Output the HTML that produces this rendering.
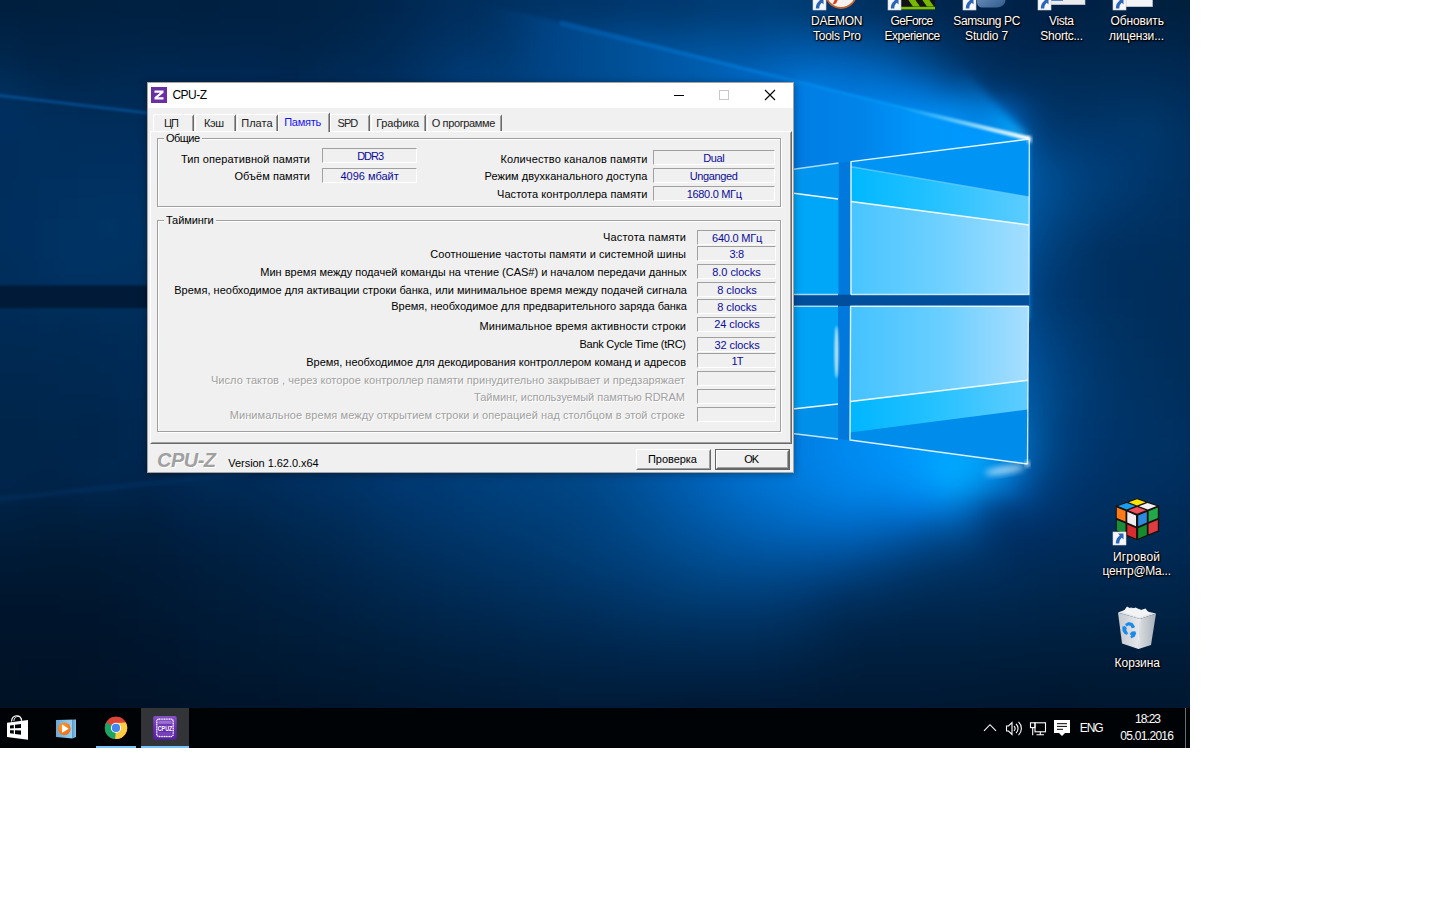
<!DOCTYPE html>
<html lang="ru"><head><meta charset="utf-8"><title>CPU-Z</title>
<style>
html,body{margin:0;padding:0;background:#fff;}
body{width:1440px;height:900px;overflow:hidden;position:relative;font-family:'Liberation Sans',sans-serif;}
#desk{position:absolute;left:0;top:0;width:1190px;height:748px;overflow:hidden;background:#06305f;}
.wp{position:absolute;left:0;top:0;}
.t{position:absolute;white-space:pre;font-family:'Liberation Sans',sans-serif;}
#win{position:absolute;left:0;top:0;width:0;height:0;}
#win .frame{position:absolute;left:147px;top:82px;width:647px;height:391px;box-sizing:border-box;border:1px solid #a8a29c;background:#f0f0f0;box-shadow:0 1px 8px rgba(0,0,0,.35);}
#win .title{position:absolute;left:148px;top:83px;width:645px;height:25px;background:#fff;}
.vb{position:absolute;box-sizing:border-box;border:1px solid;border-color:#a0a0a0 #fff #fff #a0a0a0;background:#f0f0f0;}
.tab{position:absolute;top:114px;height:17px;box-sizing:border-box;background:#f0f0f0;border-left:1px solid #fff;border-top:1px solid #fff;border-right:1px solid #696969;border-radius:2px 2px 0 0;}
.tab:after{content:"";position:absolute;right:0;top:1px;bottom:0;width:1px;background:#a0a0a0;}
.tab.sel{top:112px;height:20px;}
.panel{position:absolute;left:150px;top:131px;width:642px;height:313px;box-sizing:border-box;border:1px solid;border-color:#fff #696969 #696969 #fff;}
.panel:after{content:"";position:absolute;left:0;top:0;right:0;bottom:0;border:1px solid;border-color:transparent #a0a0a0 #a0a0a0 transparent;}
.gb{position:absolute;box-sizing:border-box;border:1px solid #a0a0a0;box-shadow:1px 1px 0 #fff, inset 1px 1px 0 #fff;}
.btn{position:absolute;box-sizing:border-box;background:#f0f0f0;border:1px solid;border-color:#fff #696969 #696969 #fff;}
.btn:after{content:"";position:absolute;left:0;top:0;right:0;bottom:0;border:1px solid;border-color:transparent #a0a0a0 #a0a0a0 transparent;}
#tb{position:absolute;left:0;top:0;width:0;height:0;}
#tb .bar{position:absolute;left:0;top:708px;width:1190px;height:40px;background:#000306;}

</style></head>
<body>
<div id="desk">
<svg class="wp" width="1190" height="748" viewBox="0 0 1190 748">
<defs>
<filter id="mb" x="-10%" y="-10%" width="120%" height="120%" color-interpolation-filters="sRGB"><feGaussianBlur stdDeviation="9"/></filter>
</defs>
<rect width="1190" height="748" fill="#05305f"/>
<g filter="url(#mb)">
<rect x="-90" y="-90" width="131" height="111" fill="#001f3f"/>
<rect x="39" y="-90" width="22" height="111" fill="#00203f"/>
<rect x="59" y="-90" width="42" height="111" fill="#002040"/>
<rect x="99" y="-90" width="22" height="111" fill="#002041"/>
<rect x="119" y="-90" width="62" height="111" fill="#002141"/>
<rect x="179" y="-90" width="42" height="111" fill="#002041"/>
<rect x="219" y="-90" width="22" height="111" fill="#002142"/>
<rect x="239" y="-90" width="42" height="111" fill="#002143"/>
<rect x="279" y="-90" width="22" height="111" fill="#002244"/>
<rect x="299" y="-90" width="22" height="111" fill="#002245"/>
<rect x="319" y="-90" width="22" height="111" fill="#002346"/>
<rect x="339" y="-90" width="22" height="111" fill="#002448"/>
<rect x="359" y="-90" width="22" height="111" fill="#00254b"/>
<rect x="379" y="-90" width="22" height="111" fill="#00264e"/>
<rect x="399" y="-90" width="22" height="111" fill="#002852"/>
<rect x="419" y="-90" width="22" height="111" fill="#002a57"/>
<rect x="439" y="-90" width="22" height="111" fill="#002d5b"/>
<rect x="459" y="-90" width="22" height="111" fill="#002e5d"/>
<rect x="479" y="-90" width="22" height="111" fill="#002f5f"/>
<rect x="499" y="-90" width="22" height="111" fill="#003161"/>
<rect x="519" y="-90" width="22" height="111" fill="#003365"/>
<rect x="539" y="-90" width="22" height="111" fill="#003467"/>
<rect x="559" y="-90" width="42" height="111" fill="#003569"/>
<rect x="599" y="-90" width="22" height="111" fill="#00366b"/>
<rect x="619" y="-90" width="22" height="111" fill="#00386f"/>
<rect x="639" y="-90" width="22" height="111" fill="#003970"/>
<rect x="659" y="-90" width="22" height="111" fill="#00396f"/>
<rect x="679" y="-90" width="22" height="111" fill="#003a71"/>
<rect x="699" y="-90" width="22" height="111" fill="#003c75"/>
<rect x="719" y="-90" width="22" height="111" fill="#003d76"/>
<rect x="739" y="-90" width="22" height="111" fill="#003d77"/>
<rect x="759" y="-90" width="22" height="111" fill="#003e78"/>
<rect x="779" y="-90" width="22" height="111" fill="#003d76"/>
<rect x="799" y="-90" width="22" height="111" fill="#003b72"/>
<rect x="819" y="-90" width="22" height="111" fill="#00376d"/>
<rect x="839" y="-90" width="22" height="111" fill="#003467"/>
<rect x="859" y="-90" width="22" height="111" fill="#003161"/>
<rect x="879" y="-90" width="22" height="111" fill="#002f5e"/>
<rect x="899" y="-90" width="22" height="111" fill="#002c59"/>
<rect x="919" y="-90" width="22" height="111" fill="#002853"/>
<rect x="939" y="-90" width="22" height="111" fill="#00254e"/>
<rect x="959" y="-90" width="22" height="111" fill="#00244b"/>
<rect x="979" y="-90" width="22" height="111" fill="#00234b"/>
<rect x="999" y="-90" width="22" height="111" fill="#002349"/>
<rect x="1019" y="-90" width="22" height="111" fill="#002146"/>
<rect x="1039" y="-90" width="22" height="111" fill="#002045"/>
<rect x="1059" y="-90" width="42" height="111" fill="#002145"/>
<rect x="1099" y="-90" width="22" height="111" fill="#002245"/>
<rect x="1119" y="-90" width="22" height="111" fill="#002143"/>
<rect x="1139" y="-90" width="22" height="111" fill="#002141"/>
<rect x="1159" y="-90" width="22" height="111" fill="#00203f"/>
<rect x="1179" y="-90" width="101" height="111" fill="#00203e"/>
<rect x="-90" y="19" width="111" height="22" fill="#002244"/>
<rect x="19" y="19" width="22" height="22" fill="#002143"/>
<rect x="39" y="19" width="22" height="22" fill="#002142"/>
<rect x="59" y="19" width="22" height="22" fill="#002143"/>
<rect x="79" y="19" width="42" height="22" fill="#002244"/>
<rect x="119" y="19" width="62" height="22" fill="#002245"/>
<rect x="179" y="19" width="42" height="22" fill="#002244"/>
<rect x="219" y="19" width="62" height="22" fill="#002246"/>
<rect x="279" y="19" width="22" height="22" fill="#002346"/>
<rect x="299" y="19" width="22" height="22" fill="#002347"/>
<rect x="319" y="19" width="22" height="22" fill="#002449"/>
<rect x="339" y="19" width="22" height="22" fill="#00254b"/>
<rect x="359" y="19" width="22" height="22" fill="#00274d"/>
<rect x="379" y="19" width="22" height="22" fill="#002851"/>
<rect x="399" y="19" width="22" height="22" fill="#002a56"/>
<rect x="419" y="19" width="22" height="22" fill="#002d5b"/>
<rect x="439" y="19" width="22" height="22" fill="#002f60"/>
<rect x="459" y="19" width="22" height="22" fill="#003163"/>
<rect x="479" y="19" width="22" height="22" fill="#003365"/>
<rect x="499" y="19" width="22" height="22" fill="#003568"/>
<rect x="519" y="19" width="22" height="22" fill="#00386e"/>
<rect x="539" y="19" width="22" height="22" fill="#003c76"/>
<rect x="559" y="19" width="42" height="22" fill="#003f7a"/>
<rect x="599" y="19" width="22" height="22" fill="#00417e"/>
<rect x="619" y="19" width="42" height="22" fill="#004382"/>
<rect x="659" y="19" width="22" height="22" fill="#004381"/>
<rect x="679" y="19" width="22" height="22" fill="#004583"/>
<rect x="699" y="19" width="22" height="22" fill="#004787"/>
<rect x="719" y="19" width="22" height="22" fill="#004788"/>
<rect x="739" y="19" width="22" height="22" fill="#004789"/>
<rect x="759" y="19" width="22" height="22" fill="#00498b"/>
<rect x="779" y="19" width="22" height="22" fill="#004a8c"/>
<rect x="799" y="19" width="22" height="22" fill="#00488a"/>
<rect x="819" y="19" width="22" height="22" fill="#004585"/>
<rect x="839" y="19" width="22" height="22" fill="#00427f"/>
<rect x="859" y="19" width="22" height="22" fill="#003e7a"/>
<rect x="879" y="19" width="22" height="22" fill="#003b73"/>
<rect x="899" y="19" width="22" height="22" fill="#00366b"/>
<rect x="919" y="19" width="22" height="22" fill="#003061"/>
<rect x="939" y="19" width="22" height="22" fill="#002b57"/>
<rect x="959" y="19" width="22" height="22" fill="#002751"/>
<rect x="979" y="19" width="22" height="22" fill="#00264f"/>
<rect x="999" y="19" width="22" height="22" fill="#00244d"/>
<rect x="1019" y="19" width="22" height="22" fill="#00234a"/>
<rect x="1039" y="19" width="22" height="22" fill="#002249"/>
<rect x="1059" y="19" width="22" height="22" fill="#002349"/>
<rect x="1079" y="19" width="42" height="22" fill="#002449"/>
<rect x="1119" y="19" width="22" height="22" fill="#002448"/>
<rect x="1139" y="19" width="22" height="22" fill="#002347"/>
<rect x="1159" y="19" width="22" height="22" fill="#002345"/>
<rect x="1179" y="19" width="101" height="22" fill="#002244"/>
<rect x="-90" y="39" width="111" height="22" fill="#002549"/>
<rect x="19" y="39" width="42" height="22" fill="#002346"/>
<rect x="59" y="39" width="22" height="22" fill="#002347"/>
<rect x="79" y="39" width="22" height="22" fill="#002448"/>
<rect x="99" y="39" width="22" height="22" fill="#002449"/>
<rect x="119" y="39" width="22" height="22" fill="#00244a"/>
<rect x="139" y="39" width="42" height="22" fill="#00254a"/>
<rect x="179" y="39" width="62" height="22" fill="#00244a"/>
<rect x="239" y="39" width="22" height="22" fill="#00244b"/>
<rect x="259" y="39" width="22" height="22" fill="#00244a"/>
<rect x="279" y="39" width="22" height="22" fill="#002449"/>
<rect x="299" y="39" width="22" height="22" fill="#00244a"/>
<rect x="319" y="39" width="22" height="22" fill="#00264d"/>
<rect x="339" y="39" width="22" height="22" fill="#00274f"/>
<rect x="359" y="39" width="22" height="22" fill="#002851"/>
<rect x="379" y="39" width="22" height="22" fill="#002a55"/>
<rect x="399" y="39" width="22" height="22" fill="#002d5b"/>
<rect x="419" y="39" width="22" height="22" fill="#003061"/>
<rect x="439" y="39" width="22" height="22" fill="#003366"/>
<rect x="459" y="39" width="22" height="22" fill="#00356a"/>
<rect x="479" y="39" width="22" height="22" fill="#00376c"/>
<rect x="499" y="39" width="22" height="22" fill="#00386c"/>
<rect x="519" y="39" width="22" height="22" fill="#003e77"/>
<rect x="539" y="39" width="22" height="22" fill="#004382"/>
<rect x="559" y="39" width="22" height="22" fill="#004789"/>
<rect x="579" y="39" width="22" height="22" fill="#004a8d"/>
<rect x="599" y="39" width="22" height="22" fill="#004f95"/>
<rect x="619" y="39" width="22" height="22" fill="#004e95"/>
<rect x="639" y="39" width="22" height="22" fill="#004f95"/>
<rect x="659" y="39" width="22" height="22" fill="#004f96"/>
<rect x="679" y="39" width="22" height="22" fill="#005098"/>
<rect x="699" y="39" width="22" height="22" fill="#00529a"/>
<rect x="719" y="39" width="22" height="22" fill="#00529b"/>
<rect x="739" y="39" width="22" height="22" fill="#00529c"/>
<rect x="759" y="39" width="22" height="22" fill="#0054a0"/>
<rect x="779" y="39" width="22" height="22" fill="#0057a5"/>
<rect x="799" y="39" width="22" height="22" fill="#0058a6"/>
<rect x="819" y="39" width="22" height="22" fill="#0056a4"/>
<rect x="839" y="39" width="22" height="22" fill="#0054a0"/>
<rect x="859" y="39" width="22" height="22" fill="#005098"/>
<rect x="879" y="39" width="22" height="22" fill="#004b8f"/>
<rect x="899" y="39" width="22" height="22" fill="#004483"/>
<rect x="919" y="39" width="22" height="22" fill="#003c75"/>
<rect x="939" y="39" width="22" height="22" fill="#003265"/>
<rect x="959" y="39" width="22" height="22" fill="#002c5a"/>
<rect x="979" y="39" width="22" height="22" fill="#002955"/>
<rect x="999" y="39" width="22" height="22" fill="#002752"/>
<rect x="1019" y="39" width="22" height="22" fill="#00264f"/>
<rect x="1039" y="39" width="22" height="22" fill="#00254e"/>
<rect x="1059" y="39" width="42" height="22" fill="#00264e"/>
<rect x="1099" y="39" width="42" height="22" fill="#00274e"/>
<rect x="1139" y="39" width="22" height="22" fill="#00264d"/>
<rect x="1159" y="39" width="22" height="22" fill="#00264c"/>
<rect x="1179" y="39" width="101" height="22" fill="#00254a"/>
<rect x="-90" y="59" width="111" height="22" fill="#002951"/>
<rect x="19" y="59" width="22" height="22" fill="#00264d"/>
<rect x="39" y="59" width="22" height="22" fill="#00264b"/>
<rect x="59" y="59" width="22" height="22" fill="#00254b"/>
<rect x="79" y="59" width="22" height="22" fill="#00264c"/>
<rect x="99" y="59" width="22" height="22" fill="#00264d"/>
<rect x="119" y="59" width="22" height="22" fill="#00274e"/>
<rect x="139" y="59" width="42" height="22" fill="#002750"/>
<rect x="179" y="59" width="22" height="22" fill="#00274f"/>
<rect x="199" y="59" width="42" height="22" fill="#002750"/>
<rect x="239" y="59" width="22" height="22" fill="#002751"/>
<rect x="259" y="59" width="22" height="22" fill="#002750"/>
<rect x="279" y="59" width="22" height="22" fill="#00264f"/>
<rect x="299" y="59" width="22" height="22" fill="#00274f"/>
<rect x="319" y="59" width="22" height="22" fill="#002852"/>
<rect x="339" y="59" width="22" height="22" fill="#002a55"/>
<rect x="359" y="59" width="22" height="22" fill="#002b57"/>
<rect x="379" y="59" width="22" height="22" fill="#002c5a"/>
<rect x="399" y="59" width="22" height="22" fill="#002f60"/>
<rect x="419" y="59" width="22" height="22" fill="#003366"/>
<rect x="439" y="59" width="22" height="22" fill="#00366d"/>
<rect x="459" y="59" width="22" height="22" fill="#003a73"/>
<rect x="479" y="59" width="22" height="22" fill="#003c75"/>
<rect x="499" y="59" width="22" height="22" fill="#003e78"/>
<rect x="519" y="59" width="22" height="22" fill="#004380"/>
<rect x="539" y="59" width="22" height="22" fill="#004889"/>
<rect x="559" y="59" width="22" height="22" fill="#004c91"/>
<rect x="579" y="59" width="22" height="22" fill="#005098"/>
<rect x="599" y="59" width="22" height="22" fill="#00539e"/>
<rect x="619" y="59" width="22" height="22" fill="#0056a1"/>
<rect x="639" y="59" width="22" height="22" fill="#0057a5"/>
<rect x="659" y="59" width="22" height="22" fill="#0059a7"/>
<rect x="679" y="59" width="22" height="22" fill="#005aa9"/>
<rect x="699" y="59" width="22" height="22" fill="#005cac"/>
<rect x="719" y="59" width="22" height="22" fill="#005dae"/>
<rect x="739" y="59" width="22" height="22" fill="#005fb2"/>
<rect x="759" y="59" width="22" height="22" fill="#0062b8"/>
<rect x="779" y="59" width="22" height="22" fill="#0065be"/>
<rect x="799" y="59" width="22" height="22" fill="#0068c2"/>
<rect x="819" y="59" width="22" height="22" fill="#0069c4"/>
<rect x="839" y="59" width="22" height="22" fill="#0066c0"/>
<rect x="859" y="59" width="22" height="22" fill="#0064ba"/>
<rect x="879" y="59" width="22" height="22" fill="#005fb1"/>
<rect x="899" y="59" width="22" height="22" fill="#0056a3"/>
<rect x="919" y="59" width="22" height="22" fill="#004d93"/>
<rect x="939" y="59" width="22" height="22" fill="#004280"/>
<rect x="959" y="59" width="22" height="22" fill="#00366c"/>
<rect x="979" y="59" width="22" height="22" fill="#002f5f"/>
<rect x="999" y="59" width="22" height="22" fill="#002c59"/>
<rect x="1019" y="59" width="22" height="22" fill="#002b57"/>
<rect x="1039" y="59" width="22" height="22" fill="#002b56"/>
<rect x="1059" y="59" width="102" height="22" fill="#002a54"/>
<rect x="1159" y="59" width="22" height="22" fill="#002953"/>
<rect x="1179" y="59" width="101" height="22" fill="#002851"/>
<rect x="-90" y="79" width="111" height="22" fill="#002e5b"/>
<rect x="19" y="79" width="22" height="22" fill="#002b56"/>
<rect x="39" y="79" width="22" height="22" fill="#002952"/>
<rect x="59" y="79" width="22" height="22" fill="#002850"/>
<rect x="79" y="79" width="22" height="22" fill="#002851"/>
<rect x="99" y="79" width="22" height="22" fill="#002952"/>
<rect x="119" y="79" width="22" height="22" fill="#002953"/>
<rect x="139" y="79" width="22" height="22" fill="#002954"/>
<rect x="159" y="79" width="62" height="22" fill="#002955"/>
<rect x="219" y="79" width="22" height="22" fill="#002956"/>
<rect x="239" y="79" width="22" height="22" fill="#002a57"/>
<rect x="259" y="79" width="42" height="22" fill="#002a56"/>
<rect x="299" y="79" width="22" height="22" fill="#002b57"/>
<rect x="319" y="79" width="22" height="22" fill="#002c59"/>
<rect x="339" y="79" width="22" height="22" fill="#002d5b"/>
<rect x="359" y="79" width="22" height="22" fill="#002e5e"/>
<rect x="379" y="79" width="22" height="22" fill="#003061"/>
<rect x="399" y="79" width="22" height="22" fill="#003266"/>
<rect x="419" y="79" width="22" height="22" fill="#00366d"/>
<rect x="439" y="79" width="22" height="22" fill="#003a74"/>
<rect x="459" y="79" width="22" height="22" fill="#003e7a"/>
<rect x="479" y="79" width="22" height="22" fill="#00407e"/>
<rect x="499" y="79" width="22" height="22" fill="#004382"/>
<rect x="519" y="79" width="22" height="22" fill="#004789"/>
<rect x="539" y="79" width="22" height="22" fill="#004c90"/>
<rect x="559" y="79" width="22" height="22" fill="#005098"/>
<rect x="579" y="79" width="22" height="22" fill="#00549f"/>
<rect x="599" y="79" width="22" height="22" fill="#0057a5"/>
<rect x="619" y="79" width="22" height="22" fill="#005aaa"/>
<rect x="639" y="79" width="22" height="22" fill="#005dae"/>
<rect x="659" y="79" width="22" height="22" fill="#005fb2"/>
<rect x="679" y="79" width="22" height="22" fill="#0061b5"/>
<rect x="699" y="79" width="22" height="22" fill="#0063ba"/>
<rect x="719" y="79" width="22" height="22" fill="#0066be"/>
<rect x="739" y="79" width="22" height="22" fill="#006ac5"/>
<rect x="759" y="79" width="22" height="22" fill="#0070cd"/>
<rect x="779" y="79" width="22" height="22" fill="#0077d8"/>
<rect x="799" y="79" width="22" height="22" fill="#007ee1"/>
<rect x="819" y="79" width="22" height="22" fill="#0078da"/>
<rect x="839" y="79" width="22" height="22" fill="#0075d7"/>
<rect x="859" y="79" width="22" height="22" fill="#0075d6"/>
<rect x="879" y="79" width="22" height="22" fill="#0073d3"/>
<rect x="899" y="79" width="22" height="22" fill="#0070ce"/>
<rect x="919" y="79" width="22" height="22" fill="#006ac3"/>
<rect x="939" y="79" width="22" height="22" fill="#005dae"/>
<rect x="959" y="79" width="22" height="22" fill="#004c91"/>
<rect x="979" y="79" width="22" height="22" fill="#003a72"/>
<rect x="999" y="79" width="22" height="22" fill="#00356a"/>
<rect x="1019" y="79" width="22" height="22" fill="#003163"/>
<rect x="1039" y="79" width="22" height="22" fill="#002f5d"/>
<rect x="1059" y="79" width="22" height="22" fill="#002d5b"/>
<rect x="1079" y="79" width="22" height="22" fill="#002d5a"/>
<rect x="1099" y="79" width="22" height="22" fill="#002e5b"/>
<rect x="1119" y="79" width="22" height="22" fill="#002e5c"/>
<rect x="1139" y="79" width="22" height="22" fill="#002e5b"/>
<rect x="1159" y="79" width="22" height="22" fill="#002d59"/>
<rect x="1179" y="79" width="101" height="22" fill="#002b56"/>
<rect x="-90" y="99" width="111" height="22" fill="#003060"/>
<rect x="19" y="99" width="22" height="22" fill="#002e5b"/>
<rect x="39" y="99" width="42" height="22" fill="#002c59"/>
<rect x="79" y="99" width="62" height="22" fill="#002b57"/>
<rect x="139" y="99" width="42" height="22" fill="#002b58"/>
<rect x="179" y="99" width="22" height="22" fill="#002b59"/>
<rect x="199" y="99" width="22" height="22" fill="#002c5a"/>
<rect x="219" y="99" width="22" height="22" fill="#002c5b"/>
<rect x="239" y="99" width="22" height="22" fill="#002d5c"/>
<rect x="259" y="99" width="22" height="22" fill="#002e5d"/>
<rect x="279" y="99" width="22" height="22" fill="#002f5e"/>
<rect x="299" y="99" width="22" height="22" fill="#002f5f"/>
<rect x="319" y="99" width="22" height="22" fill="#003060"/>
<rect x="339" y="99" width="22" height="22" fill="#003162"/>
<rect x="359" y="99" width="22" height="22" fill="#003264"/>
<rect x="379" y="99" width="22" height="22" fill="#003468"/>
<rect x="399" y="99" width="22" height="22" fill="#00366c"/>
<rect x="419" y="99" width="22" height="22" fill="#003972"/>
<rect x="439" y="99" width="22" height="22" fill="#003d79"/>
<rect x="459" y="99" width="22" height="22" fill="#00417f"/>
<rect x="479" y="99" width="22" height="22" fill="#004485"/>
<rect x="499" y="99" width="22" height="22" fill="#00478a"/>
<rect x="519" y="99" width="22" height="22" fill="#004b90"/>
<rect x="539" y="99" width="22" height="22" fill="#004f96"/>
<rect x="559" y="99" width="22" height="22" fill="#00539d"/>
<rect x="579" y="99" width="22" height="22" fill="#0057a4"/>
<rect x="599" y="99" width="22" height="22" fill="#005aaa"/>
<rect x="619" y="99" width="22" height="22" fill="#005db0"/>
<rect x="639" y="99" width="22" height="22" fill="#0060b5"/>
<rect x="659" y="99" width="22" height="22" fill="#0063ba"/>
<rect x="679" y="99" width="22" height="22" fill="#0066bf"/>
<rect x="699" y="99" width="22" height="22" fill="#0069c4"/>
<rect x="719" y="99" width="22" height="22" fill="#006dca"/>
<rect x="739" y="99" width="22" height="22" fill="#0071d0"/>
<rect x="759" y="99" width="22" height="22" fill="#0077d8"/>
<rect x="779" y="99" width="22" height="22" fill="#007de1"/>
<rect x="799" y="99" width="22" height="22" fill="#0081e7"/>
<rect x="819" y="99" width="42" height="22" fill="#007ee4"/>
<rect x="859" y="99" width="22" height="22" fill="#0082e9"/>
<rect x="879" y="99" width="42" height="22" fill="#0085eb"/>
<rect x="919" y="99" width="22" height="22" fill="#0085e9"/>
<rect x="939" y="99" width="22" height="22" fill="#0085e8"/>
<rect x="959" y="99" width="22" height="22" fill="#0078d2"/>
<rect x="979" y="99" width="22" height="22" fill="#0061b5"/>
<rect x="999" y="99" width="22" height="22" fill="#0055a3"/>
<rect x="1019" y="99" width="22" height="22" fill="#003e7b"/>
<rect x="1039" y="99" width="22" height="22" fill="#003467"/>
<rect x="1059" y="99" width="22" height="22" fill="#003262"/>
<rect x="1079" y="99" width="22" height="22" fill="#003162"/>
<rect x="1099" y="99" width="22" height="22" fill="#003263"/>
<rect x="1119" y="99" width="42" height="22" fill="#003363"/>
<rect x="1159" y="99" width="22" height="22" fill="#003160"/>
<rect x="1179" y="99" width="101" height="22" fill="#002e5b"/>
<rect x="-90" y="119" width="111" height="22" fill="#002e5e"/>
<rect x="19" y="119" width="22" height="22" fill="#002e5d"/>
<rect x="39" y="119" width="42" height="22" fill="#002e5c"/>
<rect x="79" y="119" width="82" height="22" fill="#002d5b"/>
<rect x="159" y="119" width="22" height="22" fill="#002d5c"/>
<rect x="179" y="119" width="22" height="22" fill="#002d5d"/>
<rect x="199" y="119" width="22" height="22" fill="#002e5e"/>
<rect x="219" y="119" width="22" height="22" fill="#002f5f"/>
<rect x="239" y="119" width="22" height="22" fill="#003061"/>
<rect x="259" y="119" width="22" height="22" fill="#003163"/>
<rect x="279" y="119" width="22" height="22" fill="#003365"/>
<rect x="299" y="119" width="42" height="22" fill="#003467"/>
<rect x="339" y="119" width="22" height="22" fill="#003468"/>
<rect x="359" y="119" width="22" height="22" fill="#00356a"/>
<rect x="379" y="119" width="22" height="22" fill="#00376d"/>
<rect x="399" y="119" width="22" height="22" fill="#003972"/>
<rect x="419" y="119" width="22" height="22" fill="#003c77"/>
<rect x="439" y="119" width="22" height="22" fill="#00407d"/>
<rect x="459" y="119" width="22" height="22" fill="#004384"/>
<rect x="479" y="119" width="22" height="22" fill="#00478a"/>
<rect x="499" y="119" width="22" height="22" fill="#004b90"/>
<rect x="519" y="119" width="22" height="22" fill="#004e95"/>
<rect x="539" y="119" width="22" height="22" fill="#00519b"/>
<rect x="559" y="119" width="22" height="22" fill="#0055a1"/>
<rect x="579" y="119" width="22" height="22" fill="#0058a8"/>
<rect x="599" y="119" width="22" height="22" fill="#005cae"/>
<rect x="619" y="119" width="22" height="22" fill="#0060b4"/>
<rect x="639" y="119" width="22" height="22" fill="#0063ba"/>
<rect x="659" y="119" width="22" height="22" fill="#0066bf"/>
<rect x="679" y="119" width="22" height="22" fill="#006ac5"/>
<rect x="699" y="119" width="22" height="22" fill="#006dcb"/>
<rect x="719" y="119" width="22" height="22" fill="#0071d0"/>
<rect x="739" y="119" width="22" height="22" fill="#0075d6"/>
<rect x="759" y="119" width="22" height="22" fill="#0079dd"/>
<rect x="779" y="119" width="22" height="22" fill="#007de2"/>
<rect x="799" y="119" width="42" height="22" fill="#007fe6"/>
<rect x="839" y="119" width="22" height="22" fill="#0081e8"/>
<rect x="859" y="119" width="22" height="22" fill="#0085ec"/>
<rect x="879" y="119" width="22" height="22" fill="#008af1"/>
<rect x="899" y="119" width="22" height="22" fill="#0091f6"/>
<rect x="919" y="119" width="22" height="22" fill="#0095fa"/>
<rect x="939" y="119" width="22" height="22" fill="#0095fb"/>
<rect x="959" y="119" width="22" height="22" fill="#008cf0"/>
<rect x="979" y="119" width="22" height="22" fill="#007dde"/>
<rect x="999" y="119" width="22" height="22" fill="#0072d1"/>
<rect x="1019" y="119" width="22" height="22" fill="#004a8e"/>
<rect x="1039" y="119" width="22" height="22" fill="#003971"/>
<rect x="1059" y="119" width="22" height="22" fill="#00376c"/>
<rect x="1079" y="119" width="42" height="22" fill="#00366a"/>
<rect x="1119" y="119" width="22" height="22" fill="#00376a"/>
<rect x="1139" y="119" width="22" height="22" fill="#00386b"/>
<rect x="1159" y="119" width="22" height="22" fill="#003465"/>
<rect x="1179" y="119" width="101" height="22" fill="#00305f"/>
<rect x="-90" y="139" width="111" height="22" fill="#002d5c"/>
<rect x="19" y="139" width="42" height="22" fill="#002e5d"/>
<rect x="59" y="139" width="22" height="22" fill="#002e5c"/>
<rect x="79" y="139" width="42" height="22" fill="#002e5d"/>
<rect x="119" y="139" width="42" height="22" fill="#002e5e"/>
<rect x="159" y="139" width="22" height="22" fill="#002f5f"/>
<rect x="179" y="139" width="22" height="22" fill="#002f60"/>
<rect x="199" y="139" width="22" height="22" fill="#003061"/>
<rect x="219" y="139" width="22" height="22" fill="#003163"/>
<rect x="239" y="139" width="22" height="22" fill="#003265"/>
<rect x="259" y="139" width="22" height="22" fill="#003468"/>
<rect x="279" y="139" width="22" height="22" fill="#00366b"/>
<rect x="299" y="139" width="62" height="22" fill="#00376d"/>
<rect x="359" y="139" width="22" height="22" fill="#00386f"/>
<rect x="379" y="139" width="22" height="22" fill="#003a72"/>
<rect x="399" y="139" width="22" height="22" fill="#003c76"/>
<rect x="419" y="139" width="22" height="22" fill="#003f7b"/>
<rect x="439" y="139" width="22" height="22" fill="#004281"/>
<rect x="459" y="139" width="22" height="22" fill="#004687"/>
<rect x="479" y="139" width="22" height="22" fill="#004a8e"/>
<rect x="499" y="139" width="22" height="22" fill="#004d94"/>
<rect x="519" y="139" width="22" height="22" fill="#005099"/>
<rect x="539" y="139" width="22" height="22" fill="#00539e"/>
<rect x="559" y="139" width="22" height="22" fill="#0056a4"/>
<rect x="579" y="139" width="22" height="22" fill="#005aaa"/>
<rect x="599" y="139" width="22" height="22" fill="#005db0"/>
<rect x="619" y="139" width="22" height="22" fill="#0061b6"/>
<rect x="639" y="139" width="22" height="22" fill="#0064bc"/>
<rect x="659" y="139" width="22" height="22" fill="#0068c3"/>
<rect x="679" y="139" width="22" height="22" fill="#006cc9"/>
<rect x="699" y="139" width="22" height="22" fill="#006fcf"/>
<rect x="719" y="139" width="22" height="22" fill="#0072d4"/>
<rect x="739" y="139" width="22" height="22" fill="#0076d9"/>
<rect x="759" y="139" width="22" height="22" fill="#0079de"/>
<rect x="779" y="139" width="22" height="22" fill="#007be1"/>
<rect x="799" y="139" width="22" height="22" fill="#007ee4"/>
<rect x="819" y="139" width="22" height="22" fill="#007fe6"/>
<rect x="839" y="139" width="42" height="22" fill="#0081e7"/>
<rect x="879" y="139" width="22" height="22" fill="#0087ec"/>
<rect x="899" y="139" width="22" height="22" fill="#008ff5"/>
<rect x="919" y="139" width="22" height="22" fill="#0094fa"/>
<rect x="939" y="139" width="22" height="22" fill="#0095fa"/>
<rect x="959" y="139" width="22" height="22" fill="#008ef1"/>
<rect x="979" y="139" width="22" height="22" fill="#0080e0"/>
<rect x="999" y="139" width="22" height="22" fill="#006dc5"/>
<rect x="1019" y="139" width="22" height="22" fill="#00539b"/>
<rect x="1039" y="139" width="22" height="22" fill="#004280"/>
<rect x="1059" y="139" width="22" height="22" fill="#003d77"/>
<rect x="1079" y="139" width="22" height="22" fill="#003b73"/>
<rect x="1099" y="139" width="22" height="22" fill="#003970"/>
<rect x="1119" y="139" width="22" height="22" fill="#00386e"/>
<rect x="1139" y="139" width="22" height="22" fill="#00376b"/>
<rect x="1159" y="139" width="22" height="22" fill="#003466"/>
<rect x="1179" y="139" width="101" height="22" fill="#003161"/>
<rect x="-90" y="159" width="111" height="22" fill="#002d5c"/>
<rect x="19" y="159" width="22" height="22" fill="#002e5d"/>
<rect x="39" y="159" width="42" height="22" fill="#002f5e"/>
<rect x="79" y="159" width="22" height="22" fill="#00305f"/>
<rect x="99" y="159" width="42" height="22" fill="#003060"/>
<rect x="139" y="159" width="42" height="22" fill="#003061"/>
<rect x="179" y="159" width="22" height="22" fill="#003162"/>
<rect x="199" y="159" width="22" height="22" fill="#003264"/>
<rect x="219" y="159" width="22" height="22" fill="#003365"/>
<rect x="239" y="159" width="22" height="22" fill="#003468"/>
<rect x="259" y="159" width="22" height="22" fill="#00366a"/>
<rect x="279" y="159" width="22" height="22" fill="#00386d"/>
<rect x="299" y="159" width="22" height="22" fill="#00396f"/>
<rect x="319" y="159" width="22" height="22" fill="#003970"/>
<rect x="339" y="159" width="22" height="22" fill="#003971"/>
<rect x="359" y="159" width="22" height="22" fill="#003a73"/>
<rect x="379" y="159" width="22" height="22" fill="#003c76"/>
<rect x="399" y="159" width="22" height="22" fill="#003e79"/>
<rect x="419" y="159" width="22" height="22" fill="#00407e"/>
<rect x="439" y="159" width="22" height="22" fill="#004383"/>
<rect x="459" y="159" width="22" height="22" fill="#004789"/>
<rect x="479" y="159" width="22" height="22" fill="#004a8f"/>
<rect x="499" y="159" width="22" height="22" fill="#004d95"/>
<rect x="519" y="159" width="22" height="22" fill="#00509a"/>
<rect x="539" y="159" width="22" height="22" fill="#00549f"/>
<rect x="559" y="159" width="22" height="22" fill="#0057a5"/>
<rect x="579" y="159" width="22" height="22" fill="#005aab"/>
<rect x="599" y="159" width="22" height="22" fill="#005eb1"/>
<rect x="619" y="159" width="22" height="22" fill="#0061b8"/>
<rect x="639" y="159" width="22" height="22" fill="#0065be"/>
<rect x="659" y="159" width="22" height="22" fill="#0069c4"/>
<rect x="679" y="159" width="22" height="22" fill="#006cca"/>
<rect x="699" y="159" width="22" height="22" fill="#0070d0"/>
<rect x="719" y="159" width="22" height="22" fill="#0073d4"/>
<rect x="739" y="159" width="22" height="22" fill="#0076d9"/>
<rect x="759" y="159" width="22" height="22" fill="#0078dd"/>
<rect x="779" y="159" width="22" height="22" fill="#007be0"/>
<rect x="799" y="159" width="22" height="22" fill="#007ce3"/>
<rect x="819" y="159" width="22" height="22" fill="#007ee5"/>
<rect x="839" y="159" width="22" height="22" fill="#0080e6"/>
<rect x="859" y="159" width="22" height="22" fill="#0081e7"/>
<rect x="879" y="159" width="22" height="22" fill="#0085ea"/>
<rect x="899" y="159" width="22" height="22" fill="#008aef"/>
<rect x="919" y="159" width="22" height="22" fill="#008df1"/>
<rect x="939" y="159" width="22" height="22" fill="#008cef"/>
<rect x="959" y="159" width="22" height="22" fill="#0086e7"/>
<rect x="979" y="159" width="22" height="22" fill="#007ad6"/>
<rect x="999" y="159" width="22" height="22" fill="#006abf"/>
<rect x="1019" y="159" width="22" height="22" fill="#0058a3"/>
<rect x="1039" y="159" width="22" height="22" fill="#004b8e"/>
<rect x="1059" y="159" width="22" height="22" fill="#004482"/>
<rect x="1079" y="159" width="22" height="22" fill="#003e79"/>
<rect x="1099" y="159" width="22" height="22" fill="#003b74"/>
<rect x="1119" y="159" width="22" height="22" fill="#00396f"/>
<rect x="1139" y="159" width="22" height="22" fill="#00366b"/>
<rect x="1159" y="159" width="22" height="22" fill="#003466"/>
<rect x="1179" y="159" width="101" height="22" fill="#003161"/>
<rect x="-90" y="179" width="111" height="22" fill="#002e5c"/>
<rect x="19" y="179" width="22" height="22" fill="#002f5e"/>
<rect x="39" y="179" width="22" height="22" fill="#00305f"/>
<rect x="59" y="179" width="22" height="22" fill="#003060"/>
<rect x="79" y="179" width="42" height="22" fill="#003161"/>
<rect x="119" y="179" width="42" height="22" fill="#003162"/>
<rect x="159" y="179" width="22" height="22" fill="#003263"/>
<rect x="179" y="179" width="22" height="22" fill="#003264"/>
<rect x="199" y="179" width="22" height="22" fill="#003365"/>
<rect x="219" y="179" width="22" height="22" fill="#003467"/>
<rect x="239" y="179" width="22" height="22" fill="#003569"/>
<rect x="259" y="179" width="22" height="22" fill="#00366c"/>
<rect x="279" y="179" width="22" height="22" fill="#00386e"/>
<rect x="299" y="179" width="22" height="22" fill="#003970"/>
<rect x="319" y="179" width="22" height="22" fill="#003a71"/>
<rect x="339" y="179" width="22" height="22" fill="#003b73"/>
<rect x="359" y="179" width="22" height="22" fill="#003c75"/>
<rect x="379" y="179" width="22" height="22" fill="#003d78"/>
<rect x="399" y="179" width="22" height="22" fill="#003f7b"/>
<rect x="419" y="179" width="22" height="22" fill="#004180"/>
<rect x="439" y="179" width="22" height="22" fill="#004484"/>
<rect x="459" y="179" width="22" height="22" fill="#004789"/>
<rect x="479" y="179" width="22" height="22" fill="#004a8f"/>
<rect x="499" y="179" width="22" height="22" fill="#004d94"/>
<rect x="519" y="179" width="22" height="22" fill="#00509a"/>
<rect x="539" y="179" width="22" height="22" fill="#0053a0"/>
<rect x="559" y="179" width="22" height="22" fill="#0057a5"/>
<rect x="579" y="179" width="22" height="22" fill="#005aab"/>
<rect x="599" y="179" width="22" height="22" fill="#005eb2"/>
<rect x="619" y="179" width="22" height="22" fill="#0061b8"/>
<rect x="639" y="179" width="22" height="22" fill="#0065be"/>
<rect x="659" y="179" width="22" height="22" fill="#0068c3"/>
<rect x="679" y="179" width="22" height="22" fill="#006cc9"/>
<rect x="699" y="179" width="22" height="22" fill="#006fcf"/>
<rect x="719" y="179" width="22" height="22" fill="#0072d3"/>
<rect x="739" y="179" width="22" height="22" fill="#0075d8"/>
<rect x="759" y="179" width="22" height="22" fill="#0077dc"/>
<rect x="779" y="179" width="22" height="22" fill="#0079df"/>
<rect x="799" y="179" width="22" height="22" fill="#007be1"/>
<rect x="819" y="179" width="22" height="22" fill="#007de3"/>
<rect x="839" y="179" width="22" height="22" fill="#007ee4"/>
<rect x="859" y="179" width="22" height="22" fill="#0080e5"/>
<rect x="879" y="179" width="22" height="22" fill="#0082e7"/>
<rect x="899" y="179" width="22" height="22" fill="#0083e8"/>
<rect x="919" y="179" width="22" height="22" fill="#0083e7"/>
<rect x="939" y="179" width="22" height="22" fill="#0081e3"/>
<rect x="959" y="179" width="22" height="22" fill="#007cda"/>
<rect x="979" y="179" width="22" height="22" fill="#0072cb"/>
<rect x="999" y="179" width="22" height="22" fill="#0066b8"/>
<rect x="1019" y="179" width="22" height="22" fill="#0058a3"/>
<rect x="1039" y="179" width="22" height="22" fill="#004e92"/>
<rect x="1059" y="179" width="22" height="22" fill="#004584"/>
<rect x="1079" y="179" width="22" height="22" fill="#003f7a"/>
<rect x="1099" y="179" width="22" height="22" fill="#003b74"/>
<rect x="1119" y="179" width="22" height="22" fill="#00386e"/>
<rect x="1139" y="179" width="22" height="22" fill="#003569"/>
<rect x="1159" y="179" width="22" height="22" fill="#003364"/>
<rect x="1179" y="179" width="101" height="22" fill="#003060"/>
<rect x="-90" y="199" width="111" height="22" fill="#002e5d"/>
<rect x="19" y="199" width="22" height="22" fill="#002f5f"/>
<rect x="39" y="199" width="22" height="22" fill="#003060"/>
<rect x="59" y="199" width="22" height="22" fill="#003161"/>
<rect x="79" y="199" width="22" height="22" fill="#003262"/>
<rect x="99" y="199" width="42" height="22" fill="#003363"/>
<rect x="139" y="199" width="22" height="22" fill="#003263"/>
<rect x="159" y="199" width="22" height="22" fill="#003364"/>
<rect x="179" y="199" width="22" height="22" fill="#003365"/>
<rect x="199" y="199" width="22" height="22" fill="#003466"/>
<rect x="219" y="199" width="22" height="22" fill="#003468"/>
<rect x="239" y="199" width="22" height="22" fill="#00366a"/>
<rect x="259" y="199" width="22" height="22" fill="#00376c"/>
<rect x="279" y="199" width="22" height="22" fill="#00386e"/>
<rect x="299" y="199" width="22" height="22" fill="#003970"/>
<rect x="319" y="199" width="22" height="22" fill="#003a72"/>
<rect x="339" y="199" width="22" height="22" fill="#003b74"/>
<rect x="359" y="199" width="22" height="22" fill="#003c77"/>
<rect x="379" y="199" width="22" height="22" fill="#003e79"/>
<rect x="399" y="199" width="22" height="22" fill="#00407d"/>
<rect x="419" y="199" width="22" height="22" fill="#004280"/>
<rect x="439" y="199" width="22" height="22" fill="#004485"/>
<rect x="459" y="199" width="22" height="22" fill="#004689"/>
<rect x="479" y="199" width="22" height="22" fill="#00498e"/>
<rect x="499" y="199" width="22" height="22" fill="#004c93"/>
<rect x="519" y="199" width="22" height="22" fill="#005099"/>
<rect x="539" y="199" width="22" height="22" fill="#00539f"/>
<rect x="559" y="199" width="22" height="22" fill="#0056a5"/>
<rect x="579" y="199" width="22" height="22" fill="#005aab"/>
<rect x="599" y="199" width="22" height="22" fill="#005db1"/>
<rect x="619" y="199" width="22" height="22" fill="#0061b7"/>
<rect x="639" y="199" width="22" height="22" fill="#0064bc"/>
<rect x="659" y="199" width="22" height="22" fill="#0067c2"/>
<rect x="679" y="199" width="22" height="22" fill="#006ac7"/>
<rect x="699" y="199" width="22" height="22" fill="#006dcd"/>
<rect x="719" y="199" width="22" height="22" fill="#0071d1"/>
<rect x="739" y="199" width="22" height="22" fill="#0073d6"/>
<rect x="759" y="199" width="22" height="22" fill="#0076da"/>
<rect x="779" y="199" width="22" height="22" fill="#0078dc"/>
<rect x="799" y="199" width="22" height="22" fill="#0079de"/>
<rect x="819" y="199" width="22" height="22" fill="#007be0"/>
<rect x="839" y="199" width="22" height="22" fill="#007ce1"/>
<rect x="859" y="199" width="42" height="22" fill="#007de2"/>
<rect x="899" y="199" width="22" height="22" fill="#007ce0"/>
<rect x="919" y="199" width="22" height="22" fill="#007adc"/>
<rect x="939" y="199" width="22" height="22" fill="#0077d6"/>
<rect x="959" y="199" width="22" height="22" fill="#0072ce"/>
<rect x="979" y="199" width="22" height="22" fill="#006ac1"/>
<rect x="999" y="199" width="22" height="22" fill="#0060b1"/>
<rect x="1019" y="199" width="22" height="22" fill="#00559e"/>
<rect x="1039" y="199" width="22" height="22" fill="#004b8d"/>
<rect x="1059" y="199" width="22" height="22" fill="#004380"/>
<rect x="1079" y="199" width="22" height="22" fill="#003d76"/>
<rect x="1099" y="199" width="22" height="22" fill="#00386f"/>
<rect x="1119" y="199" width="22" height="22" fill="#003569"/>
<rect x="1139" y="199" width="22" height="22" fill="#003366"/>
<rect x="1159" y="199" width="22" height="22" fill="#003162"/>
<rect x="1179" y="199" width="101" height="22" fill="#00305f"/>
<rect x="-90" y="219" width="111" height="22" fill="#002e5d"/>
<rect x="19" y="219" width="22" height="22" fill="#002f5f"/>
<rect x="39" y="219" width="22" height="22" fill="#003161"/>
<rect x="59" y="219" width="22" height="22" fill="#003262"/>
<rect x="79" y="219" width="22" height="22" fill="#003363"/>
<rect x="99" y="219" width="22" height="22" fill="#003464"/>
<rect x="119" y="219" width="62" height="22" fill="#003364"/>
<rect x="179" y="219" width="22" height="22" fill="#003365"/>
<rect x="199" y="219" width="22" height="22" fill="#003466"/>
<rect x="219" y="219" width="22" height="22" fill="#003568"/>
<rect x="239" y="219" width="22" height="22" fill="#00366a"/>
<rect x="259" y="219" width="22" height="22" fill="#00376c"/>
<rect x="279" y="219" width="22" height="22" fill="#00386e"/>
<rect x="299" y="219" width="22" height="22" fill="#003970"/>
<rect x="319" y="219" width="22" height="22" fill="#003a72"/>
<rect x="339" y="219" width="22" height="22" fill="#003b75"/>
<rect x="359" y="219" width="22" height="22" fill="#003d77"/>
<rect x="379" y="219" width="22" height="22" fill="#003e7a"/>
<rect x="399" y="219" width="22" height="22" fill="#00407d"/>
<rect x="419" y="219" width="22" height="22" fill="#004281"/>
<rect x="439" y="219" width="22" height="22" fill="#004484"/>
<rect x="459" y="219" width="22" height="22" fill="#004688"/>
<rect x="479" y="219" width="22" height="22" fill="#00488c"/>
<rect x="499" y="219" width="22" height="22" fill="#004b91"/>
<rect x="519" y="219" width="22" height="22" fill="#004f97"/>
<rect x="539" y="219" width="22" height="22" fill="#00529e"/>
<rect x="559" y="219" width="22" height="22" fill="#0056a4"/>
<rect x="579" y="219" width="22" height="22" fill="#0059aa"/>
<rect x="599" y="219" width="22" height="22" fill="#005cb0"/>
<rect x="619" y="219" width="22" height="22" fill="#0060b5"/>
<rect x="639" y="219" width="22" height="22" fill="#0063bb"/>
<rect x="659" y="219" width="22" height="22" fill="#0066c0"/>
<rect x="679" y="219" width="22" height="22" fill="#0069c5"/>
<rect x="699" y="219" width="22" height="22" fill="#006cca"/>
<rect x="719" y="219" width="22" height="22" fill="#006fcf"/>
<rect x="739" y="219" width="22" height="22" fill="#0072d4"/>
<rect x="759" y="219" width="22" height="22" fill="#0074d7"/>
<rect x="779" y="219" width="22" height="22" fill="#0076da"/>
<rect x="799" y="219" width="22" height="22" fill="#0078dc"/>
<rect x="819" y="219" width="22" height="22" fill="#0079dd"/>
<rect x="839" y="219" width="42" height="22" fill="#007adf"/>
<rect x="879" y="219" width="22" height="22" fill="#0079dd"/>
<rect x="899" y="219" width="22" height="22" fill="#0077d9"/>
<rect x="919" y="219" width="22" height="22" fill="#0072d2"/>
<rect x="939" y="219" width="22" height="22" fill="#006ecc"/>
<rect x="959" y="219" width="22" height="22" fill="#006bc5"/>
<rect x="979" y="219" width="22" height="22" fill="#0064b9"/>
<rect x="999" y="219" width="22" height="22" fill="#005ba9"/>
<rect x="1019" y="219" width="22" height="22" fill="#005197"/>
<rect x="1039" y="219" width="22" height="22" fill="#004686"/>
<rect x="1059" y="219" width="22" height="22" fill="#003e78"/>
<rect x="1079" y="219" width="22" height="22" fill="#00386f"/>
<rect x="1099" y="219" width="22" height="22" fill="#003468"/>
<rect x="1119" y="219" width="22" height="22" fill="#003264"/>
<rect x="1139" y="219" width="22" height="22" fill="#003162"/>
<rect x="1159" y="219" width="22" height="22" fill="#003060"/>
<rect x="1179" y="219" width="101" height="22" fill="#002f5d"/>
<rect x="-90" y="239" width="111" height="22" fill="#002e5d"/>
<rect x="19" y="239" width="22" height="22" fill="#002f5f"/>
<rect x="39" y="239" width="22" height="22" fill="#003161"/>
<rect x="59" y="239" width="22" height="22" fill="#003263"/>
<rect x="79" y="239" width="22" height="22" fill="#003364"/>
<rect x="99" y="239" width="62" height="22" fill="#003363"/>
<rect x="159" y="239" width="22" height="22" fill="#003364"/>
<rect x="179" y="239" width="22" height="22" fill="#003365"/>
<rect x="199" y="239" width="22" height="22" fill="#003466"/>
<rect x="219" y="239" width="22" height="22" fill="#003568"/>
<rect x="239" y="239" width="22" height="22" fill="#003669"/>
<rect x="259" y="239" width="22" height="22" fill="#00376b"/>
<rect x="279" y="239" width="22" height="22" fill="#00386d"/>
<rect x="299" y="239" width="22" height="22" fill="#00396f"/>
<rect x="319" y="239" width="22" height="22" fill="#003a72"/>
<rect x="339" y="239" width="22" height="22" fill="#003b75"/>
<rect x="359" y="239" width="22" height="22" fill="#003d77"/>
<rect x="379" y="239" width="22" height="22" fill="#003e7a"/>
<rect x="399" y="239" width="22" height="22" fill="#00407d"/>
<rect x="419" y="239" width="22" height="22" fill="#004280"/>
<rect x="439" y="239" width="22" height="22" fill="#004384"/>
<rect x="459" y="239" width="22" height="22" fill="#004587"/>
<rect x="479" y="239" width="22" height="22" fill="#00478b"/>
<rect x="499" y="239" width="22" height="22" fill="#004a8f"/>
<rect x="519" y="239" width="22" height="22" fill="#004e96"/>
<rect x="539" y="239" width="22" height="22" fill="#00519c"/>
<rect x="559" y="239" width="22" height="22" fill="#0055a2"/>
<rect x="579" y="239" width="22" height="22" fill="#0058a8"/>
<rect x="599" y="239" width="22" height="22" fill="#005bae"/>
<rect x="619" y="239" width="22" height="22" fill="#005fb4"/>
<rect x="639" y="239" width="22" height="22" fill="#0062b9"/>
<rect x="659" y="239" width="22" height="22" fill="#0064be"/>
<rect x="679" y="239" width="22" height="22" fill="#0067c2"/>
<rect x="699" y="239" width="22" height="22" fill="#006ac7"/>
<rect x="719" y="239" width="22" height="22" fill="#006ecd"/>
<rect x="739" y="239" width="22" height="22" fill="#0071d2"/>
<rect x="759" y="239" width="22" height="22" fill="#0073d6"/>
<rect x="779" y="239" width="22" height="22" fill="#0075d9"/>
<rect x="799" y="239" width="22" height="22" fill="#0076da"/>
<rect x="819" y="239" width="22" height="22" fill="#0077dc"/>
<rect x="839" y="239" width="22" height="22" fill="#0078dd"/>
<rect x="859" y="239" width="22" height="22" fill="#0078dc"/>
<rect x="879" y="239" width="22" height="22" fill="#0076da"/>
<rect x="899" y="239" width="22" height="22" fill="#0073d5"/>
<rect x="919" y="239" width="22" height="22" fill="#006fcf"/>
<rect x="939" y="239" width="22" height="22" fill="#006bc8"/>
<rect x="959" y="239" width="22" height="22" fill="#0067bf"/>
<rect x="979" y="239" width="22" height="22" fill="#0060b4"/>
<rect x="999" y="239" width="22" height="22" fill="#0057a4"/>
<rect x="1019" y="239" width="22" height="22" fill="#004c91"/>
<rect x="1039" y="239" width="22" height="22" fill="#00417e"/>
<rect x="1059" y="239" width="22" height="22" fill="#003a70"/>
<rect x="1079" y="239" width="22" height="22" fill="#003568"/>
<rect x="1099" y="239" width="42" height="22" fill="#003060"/>
<rect x="1139" y="239" width="22" height="22" fill="#002f5e"/>
<rect x="1159" y="239" width="22" height="22" fill="#002f5d"/>
<rect x="1179" y="239" width="101" height="22" fill="#002e5c"/>
<rect x="-90" y="259" width="111" height="22" fill="#002e5b"/>
<rect x="19" y="259" width="22" height="22" fill="#002f5e"/>
<rect x="39" y="259" width="22" height="22" fill="#003061"/>
<rect x="59" y="259" width="42" height="22" fill="#003263"/>
<rect x="99" y="259" width="22" height="22" fill="#003262"/>
<rect x="119" y="259" width="22" height="22" fill="#003261"/>
<rect x="139" y="259" width="42" height="22" fill="#003262"/>
<rect x="179" y="259" width="22" height="22" fill="#003364"/>
<rect x="199" y="259" width="22" height="22" fill="#003365"/>
<rect x="219" y="259" width="22" height="22" fill="#003467"/>
<rect x="239" y="259" width="22" height="22" fill="#003569"/>
<rect x="259" y="259" width="22" height="22" fill="#00366b"/>
<rect x="279" y="259" width="22" height="22" fill="#00376d"/>
<rect x="299" y="259" width="22" height="22" fill="#00396f"/>
<rect x="319" y="259" width="22" height="22" fill="#003a72"/>
<rect x="339" y="259" width="22" height="22" fill="#003b74"/>
<rect x="359" y="259" width="22" height="22" fill="#003d77"/>
<rect x="379" y="259" width="22" height="22" fill="#003e7a"/>
<rect x="399" y="259" width="22" height="22" fill="#00407d"/>
<rect x="419" y="259" width="22" height="22" fill="#004180"/>
<rect x="439" y="259" width="22" height="22" fill="#004383"/>
<rect x="459" y="259" width="22" height="22" fill="#004586"/>
<rect x="479" y="259" width="22" height="22" fill="#00478a"/>
<rect x="499" y="259" width="22" height="22" fill="#004a8f"/>
<rect x="519" y="259" width="22" height="22" fill="#004d95"/>
<rect x="539" y="259" width="22" height="22" fill="#00509b"/>
<rect x="559" y="259" width="22" height="22" fill="#0054a1"/>
<rect x="579" y="259" width="22" height="22" fill="#0057a7"/>
<rect x="599" y="259" width="22" height="22" fill="#005aad"/>
<rect x="619" y="259" width="22" height="22" fill="#005eb2"/>
<rect x="639" y="259" width="22" height="22" fill="#0061b7"/>
<rect x="659" y="259" width="22" height="22" fill="#0063bc"/>
<rect x="679" y="259" width="22" height="22" fill="#0066c1"/>
<rect x="699" y="259" width="22" height="22" fill="#0069c6"/>
<rect x="719" y="259" width="22" height="22" fill="#006ccb"/>
<rect x="739" y="259" width="22" height="22" fill="#0070d0"/>
<rect x="759" y="259" width="22" height="22" fill="#0072d4"/>
<rect x="779" y="259" width="22" height="22" fill="#0074d7"/>
<rect x="799" y="259" width="22" height="22" fill="#0076da"/>
<rect x="819" y="259" width="42" height="22" fill="#0077db"/>
<rect x="859" y="259" width="22" height="22" fill="#0076da"/>
<rect x="879" y="259" width="22" height="22" fill="#0074d8"/>
<rect x="899" y="259" width="22" height="22" fill="#0071d3"/>
<rect x="919" y="259" width="22" height="22" fill="#006ecd"/>
<rect x="939" y="259" width="22" height="22" fill="#006ac6"/>
<rect x="959" y="259" width="22" height="22" fill="#0065bd"/>
<rect x="979" y="259" width="22" height="22" fill="#005fb2"/>
<rect x="999" y="259" width="22" height="22" fill="#0055a1"/>
<rect x="1019" y="259" width="22" height="22" fill="#00498c"/>
<rect x="1039" y="259" width="22" height="22" fill="#003e79"/>
<rect x="1059" y="259" width="22" height="22" fill="#00376d"/>
<rect x="1079" y="259" width="22" height="22" fill="#003365"/>
<rect x="1099" y="259" width="22" height="22" fill="#003060"/>
<rect x="1119" y="259" width="22" height="22" fill="#002f5e"/>
<rect x="1139" y="259" width="22" height="22" fill="#002e5d"/>
<rect x="1159" y="259" width="22" height="22" fill="#002e5b"/>
<rect x="1179" y="259" width="101" height="22" fill="#002d5a"/>
<rect x="-90" y="279" width="111" height="22" fill="#002d5a"/>
<rect x="19" y="279" width="22" height="22" fill="#002e5b"/>
<rect x="39" y="279" width="22" height="22" fill="#002f5e"/>
<rect x="59" y="279" width="102" height="22" fill="#00305f"/>
<rect x="159" y="279" width="22" height="22" fill="#003161"/>
<rect x="179" y="279" width="22" height="22" fill="#003262"/>
<rect x="199" y="279" width="22" height="22" fill="#003364"/>
<rect x="219" y="279" width="22" height="22" fill="#003466"/>
<rect x="239" y="279" width="22" height="22" fill="#003568"/>
<rect x="259" y="279" width="22" height="22" fill="#00366a"/>
<rect x="279" y="279" width="22" height="22" fill="#00376c"/>
<rect x="299" y="279" width="22" height="22" fill="#00386e"/>
<rect x="319" y="279" width="22" height="22" fill="#003a71"/>
<rect x="339" y="279" width="22" height="22" fill="#003b74"/>
<rect x="359" y="279" width="22" height="22" fill="#003d77"/>
<rect x="379" y="279" width="22" height="22" fill="#003e7a"/>
<rect x="399" y="279" width="22" height="22" fill="#00407c"/>
<rect x="419" y="279" width="22" height="22" fill="#00417f"/>
<rect x="439" y="279" width="22" height="22" fill="#004383"/>
<rect x="459" y="279" width="22" height="22" fill="#004586"/>
<rect x="479" y="279" width="22" height="22" fill="#00478a"/>
<rect x="499" y="279" width="22" height="22" fill="#00498e"/>
<rect x="519" y="279" width="22" height="22" fill="#004c94"/>
<rect x="539" y="279" width="22" height="22" fill="#00509a"/>
<rect x="559" y="279" width="22" height="22" fill="#00539f"/>
<rect x="579" y="279" width="22" height="22" fill="#0056a5"/>
<rect x="599" y="279" width="22" height="22" fill="#0059ab"/>
<rect x="619" y="279" width="22" height="22" fill="#005db1"/>
<rect x="639" y="279" width="22" height="22" fill="#0060b6"/>
<rect x="659" y="279" width="22" height="22" fill="#0062bb"/>
<rect x="679" y="279" width="22" height="22" fill="#0065c0"/>
<rect x="699" y="279" width="22" height="22" fill="#0068c5"/>
<rect x="719" y="279" width="22" height="22" fill="#006cca"/>
<rect x="739" y="279" width="22" height="22" fill="#006fcf"/>
<rect x="759" y="279" width="22" height="22" fill="#0071d3"/>
<rect x="779" y="279" width="22" height="22" fill="#0074d7"/>
<rect x="799" y="279" width="22" height="22" fill="#0075d9"/>
<rect x="819" y="279" width="22" height="22" fill="#0076da"/>
<rect x="839" y="279" width="22" height="22" fill="#0076db"/>
<rect x="859" y="279" width="22" height="22" fill="#0075d9"/>
<rect x="879" y="279" width="22" height="22" fill="#0074d7"/>
<rect x="899" y="279" width="22" height="22" fill="#0071d2"/>
<rect x="919" y="279" width="22" height="22" fill="#006dcd"/>
<rect x="939" y="279" width="22" height="22" fill="#0069c6"/>
<rect x="959" y="279" width="22" height="22" fill="#0065bd"/>
<rect x="979" y="279" width="22" height="22" fill="#005fb3"/>
<rect x="999" y="279" width="22" height="22" fill="#0057a4"/>
<rect x="1019" y="279" width="22" height="22" fill="#004789"/>
<rect x="1039" y="279" width="22" height="22" fill="#003b75"/>
<rect x="1059" y="279" width="22" height="22" fill="#00366c"/>
<rect x="1079" y="279" width="22" height="22" fill="#003365"/>
<rect x="1099" y="279" width="22" height="22" fill="#003061"/>
<rect x="1119" y="279" width="22" height="22" fill="#002f5e"/>
<rect x="1139" y="279" width="22" height="22" fill="#002e5c"/>
<rect x="1159" y="279" width="22" height="22" fill="#002d5a"/>
<rect x="1179" y="279" width="101" height="22" fill="#002d59"/>
<rect x="-90" y="299" width="111" height="22" fill="#002b57"/>
<rect x="19" y="299" width="22" height="22" fill="#002c58"/>
<rect x="39" y="299" width="22" height="22" fill="#002d59"/>
<rect x="59" y="299" width="42" height="22" fill="#002d5a"/>
<rect x="99" y="299" width="42" height="22" fill="#002e5b"/>
<rect x="139" y="299" width="22" height="22" fill="#002f5c"/>
<rect x="159" y="299" width="22" height="22" fill="#00305e"/>
<rect x="179" y="299" width="22" height="22" fill="#003160"/>
<rect x="199" y="299" width="22" height="22" fill="#003262"/>
<rect x="219" y="299" width="22" height="22" fill="#003365"/>
<rect x="239" y="299" width="22" height="22" fill="#003467"/>
<rect x="259" y="299" width="22" height="22" fill="#003569"/>
<rect x="279" y="299" width="22" height="22" fill="#00376b"/>
<rect x="299" y="299" width="22" height="22" fill="#00386e"/>
<rect x="319" y="299" width="22" height="22" fill="#003970"/>
<rect x="339" y="299" width="22" height="22" fill="#003b73"/>
<rect x="359" y="299" width="22" height="22" fill="#003c76"/>
<rect x="379" y="299" width="22" height="22" fill="#003e79"/>
<rect x="399" y="299" width="22" height="22" fill="#003f7c"/>
<rect x="419" y="299" width="22" height="22" fill="#00417f"/>
<rect x="439" y="299" width="22" height="22" fill="#004382"/>
<rect x="459" y="299" width="22" height="22" fill="#004485"/>
<rect x="479" y="299" width="22" height="22" fill="#004689"/>
<rect x="499" y="299" width="22" height="22" fill="#00498e"/>
<rect x="519" y="299" width="22" height="22" fill="#004c93"/>
<rect x="539" y="299" width="22" height="22" fill="#004f98"/>
<rect x="559" y="299" width="22" height="22" fill="#00529e"/>
<rect x="579" y="299" width="22" height="22" fill="#0055a4"/>
<rect x="599" y="299" width="22" height="22" fill="#0059a9"/>
<rect x="619" y="299" width="22" height="22" fill="#005caf"/>
<rect x="639" y="299" width="22" height="22" fill="#005fb4"/>
<rect x="659" y="299" width="22" height="22" fill="#0062b9"/>
<rect x="679" y="299" width="22" height="22" fill="#0065bf"/>
<rect x="699" y="299" width="22" height="22" fill="#0068c4"/>
<rect x="719" y="299" width="22" height="22" fill="#006bc9"/>
<rect x="739" y="299" width="22" height="22" fill="#006ecf"/>
<rect x="759" y="299" width="22" height="22" fill="#0071d3"/>
<rect x="779" y="299" width="22" height="22" fill="#0073d6"/>
<rect x="799" y="299" width="22" height="22" fill="#0075d9"/>
<rect x="819" y="299" width="22" height="22" fill="#0076da"/>
<rect x="839" y="299" width="22" height="22" fill="#0076db"/>
<rect x="859" y="299" width="22" height="22" fill="#0076da"/>
<rect x="879" y="299" width="22" height="22" fill="#0074d7"/>
<rect x="899" y="299" width="22" height="22" fill="#0071d2"/>
<rect x="919" y="299" width="22" height="22" fill="#006dcd"/>
<rect x="939" y="299" width="22" height="22" fill="#0069c6"/>
<rect x="959" y="299" width="22" height="22" fill="#0065bd"/>
<rect x="979" y="299" width="22" height="22" fill="#005fb3"/>
<rect x="999" y="299" width="22" height="22" fill="#0057a5"/>
<rect x="1019" y="299" width="22" height="22" fill="#00488a"/>
<rect x="1039" y="299" width="22" height="22" fill="#003c76"/>
<rect x="1059" y="299" width="22" height="22" fill="#00376d"/>
<rect x="1079" y="299" width="22" height="22" fill="#003467"/>
<rect x="1099" y="299" width="22" height="22" fill="#003162"/>
<rect x="1119" y="299" width="22" height="22" fill="#00305f"/>
<rect x="1139" y="299" width="22" height="22" fill="#002e5c"/>
<rect x="1159" y="299" width="22" height="22" fill="#002d5a"/>
<rect x="1179" y="299" width="101" height="22" fill="#002c59"/>
<rect x="-90" y="319" width="111" height="22" fill="#002a54"/>
<rect x="19" y="319" width="22" height="22" fill="#002a55"/>
<rect x="39" y="319" width="22" height="22" fill="#002b55"/>
<rect x="59" y="319" width="22" height="22" fill="#002a54"/>
<rect x="79" y="319" width="22" height="22" fill="#002b56"/>
<rect x="99" y="319" width="22" height="22" fill="#002c57"/>
<rect x="119" y="319" width="22" height="22" fill="#002c58"/>
<rect x="139" y="319" width="22" height="22" fill="#002d5a"/>
<rect x="159" y="319" width="22" height="22" fill="#002e5c"/>
<rect x="179" y="319" width="22" height="22" fill="#00305f"/>
<rect x="199" y="319" width="22" height="22" fill="#003161"/>
<rect x="219" y="319" width="22" height="22" fill="#003263"/>
<rect x="239" y="319" width="22" height="22" fill="#003366"/>
<rect x="259" y="319" width="22" height="22" fill="#003568"/>
<rect x="279" y="319" width="22" height="22" fill="#00366a"/>
<rect x="299" y="319" width="22" height="22" fill="#00376d"/>
<rect x="319" y="319" width="22" height="22" fill="#003970"/>
<rect x="339" y="319" width="22" height="22" fill="#003a72"/>
<rect x="359" y="319" width="22" height="22" fill="#003c75"/>
<rect x="379" y="319" width="22" height="22" fill="#003d78"/>
<rect x="399" y="319" width="22" height="22" fill="#003f7b"/>
<rect x="419" y="319" width="22" height="22" fill="#00407e"/>
<rect x="439" y="319" width="22" height="22" fill="#004281"/>
<rect x="459" y="319" width="22" height="22" fill="#004484"/>
<rect x="479" y="319" width="22" height="22" fill="#004688"/>
<rect x="499" y="319" width="22" height="22" fill="#00488c"/>
<rect x="519" y="319" width="22" height="22" fill="#004b91"/>
<rect x="539" y="319" width="22" height="22" fill="#004e97"/>
<rect x="559" y="319" width="22" height="22" fill="#00519c"/>
<rect x="579" y="319" width="22" height="22" fill="#0054a2"/>
<rect x="599" y="319" width="22" height="22" fill="#0058a8"/>
<rect x="619" y="319" width="22" height="22" fill="#005bad"/>
<rect x="639" y="319" width="22" height="22" fill="#005eb3"/>
<rect x="659" y="319" width="22" height="22" fill="#0061b8"/>
<rect x="679" y="319" width="22" height="22" fill="#0064bd"/>
<rect x="699" y="319" width="22" height="22" fill="#0067c3"/>
<rect x="719" y="319" width="22" height="22" fill="#006bc9"/>
<rect x="739" y="319" width="22" height="22" fill="#006ece"/>
<rect x="759" y="319" width="22" height="22" fill="#0071d3"/>
<rect x="779" y="319" width="22" height="22" fill="#0074d7"/>
<rect x="799" y="319" width="22" height="22" fill="#0075d9"/>
<rect x="819" y="319" width="22" height="22" fill="#0077db"/>
<rect x="839" y="319" width="22" height="22" fill="#0077dc"/>
<rect x="859" y="319" width="22" height="22" fill="#0077db"/>
<rect x="879" y="319" width="22" height="22" fill="#0075d8"/>
<rect x="899" y="319" width="22" height="22" fill="#0072d4"/>
<rect x="919" y="319" width="22" height="22" fill="#006ecd"/>
<rect x="939" y="319" width="22" height="22" fill="#006ac6"/>
<rect x="959" y="319" width="22" height="22" fill="#0065be"/>
<rect x="979" y="319" width="22" height="22" fill="#005fb3"/>
<rect x="999" y="319" width="22" height="22" fill="#0056a3"/>
<rect x="1019" y="319" width="22" height="22" fill="#004b8f"/>
<rect x="1039" y="319" width="22" height="22" fill="#00417e"/>
<rect x="1059" y="319" width="22" height="22" fill="#003a72"/>
<rect x="1079" y="319" width="22" height="22" fill="#00366a"/>
<rect x="1099" y="319" width="22" height="22" fill="#003364"/>
<rect x="1119" y="319" width="22" height="22" fill="#003160"/>
<rect x="1139" y="319" width="22" height="22" fill="#002f5d"/>
<rect x="1159" y="319" width="22" height="22" fill="#002e5b"/>
<rect x="1179" y="319" width="101" height="22" fill="#002d59"/>
<rect x="-90" y="339" width="131" height="22" fill="#002952"/>
<rect x="39" y="339" width="42" height="22" fill="#002953"/>
<rect x="79" y="339" width="22" height="22" fill="#002a54"/>
<rect x="99" y="339" width="22" height="22" fill="#002a55"/>
<rect x="119" y="339" width="22" height="22" fill="#002b56"/>
<rect x="139" y="339" width="22" height="22" fill="#002c58"/>
<rect x="159" y="339" width="22" height="22" fill="#002d5b"/>
<rect x="179" y="339" width="22" height="22" fill="#002f5d"/>
<rect x="199" y="339" width="22" height="22" fill="#003060"/>
<rect x="219" y="339" width="22" height="22" fill="#003162"/>
<rect x="239" y="339" width="22" height="22" fill="#003364"/>
<rect x="259" y="339" width="22" height="22" fill="#003467"/>
<rect x="279" y="339" width="22" height="22" fill="#003569"/>
<rect x="299" y="339" width="22" height="22" fill="#00376c"/>
<rect x="319" y="339" width="22" height="22" fill="#00386f"/>
<rect x="339" y="339" width="22" height="22" fill="#003a72"/>
<rect x="359" y="339" width="22" height="22" fill="#003b75"/>
<rect x="379" y="339" width="22" height="22" fill="#003d77"/>
<rect x="399" y="339" width="22" height="22" fill="#003e7a"/>
<rect x="419" y="339" width="22" height="22" fill="#00407d"/>
<rect x="439" y="339" width="22" height="22" fill="#004280"/>
<rect x="459" y="339" width="22" height="22" fill="#004383"/>
<rect x="479" y="339" width="22" height="22" fill="#004586"/>
<rect x="499" y="339" width="22" height="22" fill="#00478b"/>
<rect x="519" y="339" width="22" height="22" fill="#004a90"/>
<rect x="539" y="339" width="22" height="22" fill="#004d95"/>
<rect x="559" y="339" width="22" height="22" fill="#00509b"/>
<rect x="579" y="339" width="22" height="22" fill="#0053a0"/>
<rect x="599" y="339" width="22" height="22" fill="#0057a6"/>
<rect x="619" y="339" width="22" height="22" fill="#005aac"/>
<rect x="639" y="339" width="22" height="22" fill="#005db1"/>
<rect x="659" y="339" width="22" height="22" fill="#0060b7"/>
<rect x="679" y="339" width="22" height="22" fill="#0063bc"/>
<rect x="699" y="339" width="22" height="22" fill="#0066c2"/>
<rect x="719" y="339" width="22" height="22" fill="#006bc9"/>
<rect x="739" y="339" width="22" height="22" fill="#006ecf"/>
<rect x="759" y="339" width="22" height="22" fill="#0072d3"/>
<rect x="779" y="339" width="22" height="22" fill="#0074d7"/>
<rect x="799" y="339" width="22" height="22" fill="#0076da"/>
<rect x="819" y="339" width="22" height="22" fill="#0078dc"/>
<rect x="839" y="339" width="22" height="22" fill="#0079de"/>
<rect x="859" y="339" width="22" height="22" fill="#0079dd"/>
<rect x="879" y="339" width="22" height="22" fill="#0077db"/>
<rect x="899" y="339" width="22" height="22" fill="#0074d6"/>
<rect x="919" y="339" width="22" height="22" fill="#006fcf"/>
<rect x="939" y="339" width="22" height="22" fill="#006bc8"/>
<rect x="959" y="339" width="22" height="22" fill="#0067c0"/>
<rect x="979" y="339" width="22" height="22" fill="#0061b5"/>
<rect x="999" y="339" width="22" height="22" fill="#0059a6"/>
<rect x="1019" y="339" width="22" height="22" fill="#004e94"/>
<rect x="1039" y="339" width="22" height="22" fill="#004484"/>
<rect x="1059" y="339" width="22" height="22" fill="#003d77"/>
<rect x="1079" y="339" width="22" height="22" fill="#00376d"/>
<rect x="1099" y="339" width="22" height="22" fill="#003466"/>
<rect x="1119" y="339" width="22" height="22" fill="#003262"/>
<rect x="1139" y="339" width="22" height="22" fill="#00305e"/>
<rect x="1159" y="339" width="22" height="22" fill="#002e5c"/>
<rect x="1179" y="339" width="101" height="22" fill="#002d59"/>
<rect x="-90" y="359" width="131" height="22" fill="#002850"/>
<rect x="39" y="359" width="22" height="22" fill="#002851"/>
<rect x="59" y="359" width="22" height="22" fill="#002951"/>
<rect x="79" y="359" width="22" height="22" fill="#002952"/>
<rect x="99" y="359" width="22" height="22" fill="#002953"/>
<rect x="119" y="359" width="22" height="22" fill="#002a55"/>
<rect x="139" y="359" width="22" height="22" fill="#002b57"/>
<rect x="159" y="359" width="22" height="22" fill="#002c59"/>
<rect x="179" y="359" width="22" height="22" fill="#002e5c"/>
<rect x="199" y="359" width="22" height="22" fill="#002f5e"/>
<rect x="219" y="359" width="22" height="22" fill="#003161"/>
<rect x="239" y="359" width="22" height="22" fill="#003263"/>
<rect x="259" y="359" width="22" height="22" fill="#003366"/>
<rect x="279" y="359" width="22" height="22" fill="#003568"/>
<rect x="299" y="359" width="22" height="22" fill="#00366b"/>
<rect x="319" y="359" width="22" height="22" fill="#00386e"/>
<rect x="339" y="359" width="22" height="22" fill="#003971"/>
<rect x="359" y="359" width="22" height="22" fill="#003b74"/>
<rect x="379" y="359" width="22" height="22" fill="#003c77"/>
<rect x="399" y="359" width="22" height="22" fill="#003e7a"/>
<rect x="419" y="359" width="22" height="22" fill="#003f7c"/>
<rect x="439" y="359" width="22" height="22" fill="#00417f"/>
<rect x="459" y="359" width="22" height="22" fill="#004382"/>
<rect x="479" y="359" width="22" height="22" fill="#004585"/>
<rect x="499" y="359" width="22" height="22" fill="#004789"/>
<rect x="519" y="359" width="22" height="22" fill="#00498e"/>
<rect x="539" y="359" width="22" height="22" fill="#004c93"/>
<rect x="559" y="359" width="22" height="22" fill="#004f99"/>
<rect x="579" y="359" width="22" height="22" fill="#00529e"/>
<rect x="599" y="359" width="22" height="22" fill="#0056a4"/>
<rect x="619" y="359" width="22" height="22" fill="#0059aa"/>
<rect x="639" y="359" width="22" height="22" fill="#005cb0"/>
<rect x="659" y="359" width="22" height="22" fill="#0060b6"/>
<rect x="679" y="359" width="22" height="22" fill="#0063bc"/>
<rect x="699" y="359" width="22" height="22" fill="#0067c2"/>
<rect x="719" y="359" width="22" height="22" fill="#006bc9"/>
<rect x="739" y="359" width="22" height="22" fill="#006fcf"/>
<rect x="759" y="359" width="22" height="22" fill="#0073d5"/>
<rect x="779" y="359" width="22" height="22" fill="#0076d9"/>
<rect x="799" y="359" width="22" height="22" fill="#0078db"/>
<rect x="819" y="359" width="22" height="22" fill="#007ade"/>
<rect x="839" y="359" width="22" height="22" fill="#007ce1"/>
<rect x="859" y="359" width="22" height="22" fill="#007de1"/>
<rect x="879" y="359" width="22" height="22" fill="#007ce0"/>
<rect x="899" y="359" width="22" height="22" fill="#0079db"/>
<rect x="919" y="359" width="22" height="22" fill="#0073d3"/>
<rect x="939" y="359" width="22" height="22" fill="#006fcc"/>
<rect x="959" y="359" width="22" height="22" fill="#006dc5"/>
<rect x="979" y="359" width="22" height="22" fill="#0066ba"/>
<rect x="999" y="359" width="22" height="22" fill="#005dab"/>
<rect x="1019" y="359" width="22" height="22" fill="#005299"/>
<rect x="1039" y="359" width="22" height="22" fill="#004788"/>
<rect x="1059" y="359" width="22" height="22" fill="#003e7a"/>
<rect x="1079" y="359" width="22" height="22" fill="#003970"/>
<rect x="1099" y="359" width="22" height="22" fill="#003568"/>
<rect x="1119" y="359" width="22" height="22" fill="#003263"/>
<rect x="1139" y="359" width="22" height="22" fill="#003160"/>
<rect x="1159" y="359" width="22" height="22" fill="#002f5d"/>
<rect x="1179" y="359" width="101" height="22" fill="#002e5a"/>
<rect x="-90" y="379" width="131" height="22" fill="#00274e"/>
<rect x="39" y="379" width="22" height="22" fill="#00284f"/>
<rect x="59" y="379" width="42" height="22" fill="#002850"/>
<rect x="99" y="379" width="22" height="22" fill="#002851"/>
<rect x="119" y="379" width="22" height="22" fill="#002953"/>
<rect x="139" y="379" width="22" height="22" fill="#002a55"/>
<rect x="159" y="379" width="22" height="22" fill="#002c58"/>
<rect x="179" y="379" width="22" height="22" fill="#002d5b"/>
<rect x="199" y="379" width="22" height="22" fill="#002e5d"/>
<rect x="219" y="379" width="22" height="22" fill="#003060"/>
<rect x="239" y="379" width="22" height="22" fill="#003162"/>
<rect x="259" y="379" width="22" height="22" fill="#003364"/>
<rect x="279" y="379" width="22" height="22" fill="#003467"/>
<rect x="299" y="379" width="22" height="22" fill="#00356a"/>
<rect x="319" y="379" width="22" height="22" fill="#00376d"/>
<rect x="339" y="379" width="22" height="22" fill="#003970"/>
<rect x="359" y="379" width="22" height="22" fill="#003a73"/>
<rect x="379" y="379" width="22" height="22" fill="#003c76"/>
<rect x="399" y="379" width="22" height="22" fill="#003d79"/>
<rect x="419" y="379" width="22" height="22" fill="#003f7b"/>
<rect x="439" y="379" width="22" height="22" fill="#00407e"/>
<rect x="459" y="379" width="22" height="22" fill="#004281"/>
<rect x="479" y="379" width="22" height="22" fill="#004484"/>
<rect x="499" y="379" width="22" height="22" fill="#004688"/>
<rect x="519" y="379" width="22" height="22" fill="#00498c"/>
<rect x="539" y="379" width="22" height="22" fill="#004b91"/>
<rect x="559" y="379" width="22" height="22" fill="#004e96"/>
<rect x="579" y="379" width="22" height="22" fill="#00519c"/>
<rect x="599" y="379" width="22" height="22" fill="#0055a2"/>
<rect x="619" y="379" width="22" height="22" fill="#0058a8"/>
<rect x="639" y="379" width="22" height="22" fill="#005caf"/>
<rect x="659" y="379" width="22" height="22" fill="#005fb5"/>
<rect x="679" y="379" width="22" height="22" fill="#0063bc"/>
<rect x="699" y="379" width="22" height="22" fill="#0067c3"/>
<rect x="719" y="379" width="22" height="22" fill="#006cca"/>
<rect x="739" y="379" width="22" height="22" fill="#0070d1"/>
<rect x="759" y="379" width="22" height="22" fill="#0074d6"/>
<rect x="779" y="379" width="22" height="22" fill="#0078db"/>
<rect x="799" y="379" width="22" height="22" fill="#007adf"/>
<rect x="819" y="379" width="22" height="22" fill="#007de2"/>
<rect x="839" y="379" width="22" height="22" fill="#0080e5"/>
<rect x="859" y="379" width="22" height="22" fill="#0081e7"/>
<rect x="879" y="379" width="22" height="22" fill="#0082e6"/>
<rect x="899" y="379" width="22" height="22" fill="#0080e3"/>
<rect x="919" y="379" width="22" height="22" fill="#007ddd"/>
<rect x="939" y="379" width="22" height="22" fill="#007ad7"/>
<rect x="959" y="379" width="22" height="22" fill="#0076cf"/>
<rect x="979" y="379" width="22" height="22" fill="#006ec2"/>
<rect x="999" y="379" width="22" height="22" fill="#0063b2"/>
<rect x="1019" y="379" width="22" height="22" fill="#00569e"/>
<rect x="1039" y="379" width="22" height="22" fill="#004a8b"/>
<rect x="1059" y="379" width="22" height="22" fill="#00407c"/>
<rect x="1079" y="379" width="22" height="22" fill="#003a71"/>
<rect x="1099" y="379" width="22" height="22" fill="#00366a"/>
<rect x="1119" y="379" width="22" height="22" fill="#003365"/>
<rect x="1139" y="379" width="22" height="22" fill="#003161"/>
<rect x="1159" y="379" width="22" height="22" fill="#00305e"/>
<rect x="1179" y="379" width="101" height="22" fill="#002e5c"/>
<rect x="-90" y="399" width="111" height="22" fill="#00264c"/>
<rect x="19" y="399" width="22" height="22" fill="#00264d"/>
<rect x="39" y="399" width="22" height="22" fill="#00274d"/>
<rect x="59" y="399" width="42" height="22" fill="#00274e"/>
<rect x="99" y="399" width="22" height="22" fill="#00274f"/>
<rect x="119" y="399" width="22" height="22" fill="#002851"/>
<rect x="139" y="399" width="22" height="22" fill="#002954"/>
<rect x="159" y="399" width="22" height="22" fill="#002b57"/>
<rect x="179" y="399" width="22" height="22" fill="#002c5a"/>
<rect x="199" y="399" width="22" height="22" fill="#002e5c"/>
<rect x="219" y="399" width="22" height="22" fill="#002f5e"/>
<rect x="239" y="399" width="22" height="22" fill="#003061"/>
<rect x="259" y="399" width="22" height="22" fill="#003263"/>
<rect x="279" y="399" width="22" height="22" fill="#003366"/>
<rect x="299" y="399" width="22" height="22" fill="#003568"/>
<rect x="319" y="399" width="22" height="22" fill="#00366b"/>
<rect x="339" y="399" width="22" height="22" fill="#00386e"/>
<rect x="359" y="399" width="22" height="22" fill="#003972"/>
<rect x="379" y="399" width="22" height="22" fill="#003b75"/>
<rect x="399" y="399" width="22" height="22" fill="#003d77"/>
<rect x="419" y="399" width="22" height="22" fill="#003e7a"/>
<rect x="439" y="399" width="22" height="22" fill="#00407d"/>
<rect x="459" y="399" width="22" height="22" fill="#00417f"/>
<rect x="479" y="399" width="22" height="22" fill="#004382"/>
<rect x="499" y="399" width="22" height="22" fill="#004586"/>
<rect x="519" y="399" width="22" height="22" fill="#00478a"/>
<rect x="539" y="399" width="22" height="22" fill="#004a8f"/>
<rect x="559" y="399" width="22" height="22" fill="#004d94"/>
<rect x="579" y="399" width="22" height="22" fill="#005099"/>
<rect x="599" y="399" width="22" height="22" fill="#00539f"/>
<rect x="619" y="399" width="22" height="22" fill="#0057a6"/>
<rect x="639" y="399" width="22" height="22" fill="#005bad"/>
<rect x="659" y="399" width="22" height="22" fill="#005fb4"/>
<rect x="679" y="399" width="22" height="22" fill="#0063bc"/>
<rect x="699" y="399" width="22" height="22" fill="#0068c3"/>
<rect x="719" y="399" width="22" height="22" fill="#006ccb"/>
<rect x="739" y="399" width="22" height="22" fill="#0071d2"/>
<rect x="759" y="399" width="22" height="22" fill="#0076d8"/>
<rect x="779" y="399" width="22" height="22" fill="#007ade"/>
<rect x="799" y="399" width="22" height="22" fill="#007de2"/>
<rect x="819" y="399" width="22" height="22" fill="#0081e7"/>
<rect x="839" y="399" width="22" height="22" fill="#0084ea"/>
<rect x="859" y="399" width="22" height="22" fill="#0087ec"/>
<rect x="879" y="399" width="22" height="22" fill="#0089ed"/>
<rect x="899" y="399" width="22" height="22" fill="#0089ec"/>
<rect x="919" y="399" width="22" height="22" fill="#0089e9"/>
<rect x="939" y="399" width="22" height="22" fill="#0087e4"/>
<rect x="959" y="399" width="22" height="22" fill="#0082db"/>
<rect x="979" y="399" width="22" height="22" fill="#0079ce"/>
<rect x="999" y="399" width="22" height="22" fill="#006bbb"/>
<rect x="1019" y="399" width="22" height="22" fill="#005aa3"/>
<rect x="1039" y="399" width="22" height="22" fill="#004b8d"/>
<rect x="1059" y="399" width="22" height="22" fill="#003f7b"/>
<rect x="1079" y="399" width="22" height="22" fill="#003971"/>
<rect x="1099" y="399" width="22" height="22" fill="#00366a"/>
<rect x="1119" y="399" width="22" height="22" fill="#003366"/>
<rect x="1139" y="399" width="22" height="22" fill="#003263"/>
<rect x="1159" y="399" width="22" height="22" fill="#003060"/>
<rect x="1179" y="399" width="101" height="22" fill="#002f5d"/>
<rect x="-90" y="419" width="111" height="22" fill="#00254a"/>
<rect x="19" y="419" width="22" height="22" fill="#00254b"/>
<rect x="39" y="419" width="42" height="22" fill="#00264c"/>
<rect x="79" y="419" width="22" height="22" fill="#00254c"/>
<rect x="99" y="419" width="22" height="22" fill="#00264d"/>
<rect x="119" y="419" width="22" height="22" fill="#002750"/>
<rect x="139" y="419" width="22" height="22" fill="#002953"/>
<rect x="159" y="419" width="22" height="22" fill="#002a56"/>
<rect x="179" y="419" width="22" height="22" fill="#002c58"/>
<rect x="199" y="419" width="22" height="22" fill="#002d5b"/>
<rect x="219" y="419" width="22" height="22" fill="#002e5d"/>
<rect x="239" y="419" width="22" height="22" fill="#002f5f"/>
<rect x="259" y="419" width="22" height="22" fill="#003161"/>
<rect x="279" y="419" width="22" height="22" fill="#003264"/>
<rect x="299" y="419" width="22" height="22" fill="#003367"/>
<rect x="319" y="419" width="22" height="22" fill="#00356a"/>
<rect x="339" y="419" width="22" height="22" fill="#00376d"/>
<rect x="359" y="419" width="22" height="22" fill="#003870"/>
<rect x="379" y="419" width="22" height="22" fill="#003a73"/>
<rect x="399" y="419" width="22" height="22" fill="#003c76"/>
<rect x="419" y="419" width="22" height="22" fill="#003d79"/>
<rect x="439" y="419" width="22" height="22" fill="#003f7b"/>
<rect x="459" y="419" width="22" height="22" fill="#00407e"/>
<rect x="479" y="419" width="22" height="22" fill="#004280"/>
<rect x="499" y="419" width="22" height="22" fill="#004483"/>
<rect x="519" y="419" width="22" height="22" fill="#004687"/>
<rect x="539" y="419" width="22" height="22" fill="#00498c"/>
<rect x="559" y="419" width="22" height="22" fill="#004b90"/>
<rect x="579" y="419" width="22" height="22" fill="#004e96"/>
<rect x="599" y="419" width="22" height="22" fill="#00529c"/>
<rect x="619" y="419" width="22" height="22" fill="#0055a3"/>
<rect x="639" y="419" width="22" height="22" fill="#0059aa"/>
<rect x="659" y="419" width="22" height="22" fill="#005eb2"/>
<rect x="679" y="419" width="22" height="22" fill="#0062bb"/>
<rect x="699" y="419" width="22" height="22" fill="#0067c3"/>
<rect x="719" y="419" width="22" height="22" fill="#006dcb"/>
<rect x="739" y="419" width="22" height="22" fill="#0072d2"/>
<rect x="759" y="419" width="22" height="22" fill="#0077d9"/>
<rect x="779" y="419" width="22" height="22" fill="#007bdf"/>
<rect x="799" y="419" width="22" height="22" fill="#0080e5"/>
<rect x="819" y="419" width="22" height="22" fill="#0084ea"/>
<rect x="839" y="419" width="22" height="22" fill="#0088ee"/>
<rect x="859" y="419" width="22" height="22" fill="#008bf1"/>
<rect x="879" y="419" width="22" height="22" fill="#008ff3"/>
<rect x="899" y="419" width="22" height="22" fill="#0092f4"/>
<rect x="919" y="419" width="22" height="22" fill="#0095f4"/>
<rect x="939" y="419" width="22" height="22" fill="#0095f1"/>
<rect x="959" y="419" width="22" height="22" fill="#0090e9"/>
<rect x="979" y="419" width="22" height="22" fill="#0085db"/>
<rect x="999" y="419" width="22" height="22" fill="#0073c5"/>
<rect x="1019" y="419" width="22" height="22" fill="#005ea8"/>
<rect x="1039" y="419" width="22" height="22" fill="#004a8c"/>
<rect x="1059" y="419" width="22" height="22" fill="#003d79"/>
<rect x="1079" y="419" width="22" height="22" fill="#003870"/>
<rect x="1099" y="419" width="22" height="22" fill="#00356a"/>
<rect x="1119" y="419" width="22" height="22" fill="#003366"/>
<rect x="1139" y="419" width="22" height="22" fill="#003264"/>
<rect x="1159" y="419" width="22" height="22" fill="#003162"/>
<rect x="1179" y="419" width="101" height="22" fill="#002f5e"/>
<rect x="-90" y="439" width="111" height="22" fill="#00254a"/>
<rect x="19" y="439" width="42" height="22" fill="#00254b"/>
<rect x="59" y="439" width="42" height="22" fill="#00254c"/>
<rect x="99" y="439" width="22" height="22" fill="#00264d"/>
<rect x="119" y="439" width="22" height="22" fill="#00274f"/>
<rect x="139" y="439" width="22" height="22" fill="#002851"/>
<rect x="159" y="439" width="22" height="22" fill="#002954"/>
<rect x="179" y="439" width="22" height="22" fill="#002b57"/>
<rect x="199" y="439" width="22" height="22" fill="#002c59"/>
<rect x="219" y="439" width="22" height="22" fill="#002d5b"/>
<rect x="239" y="439" width="22" height="22" fill="#002e5d"/>
<rect x="259" y="439" width="22" height="22" fill="#002f5f"/>
<rect x="279" y="439" width="22" height="22" fill="#003162"/>
<rect x="299" y="439" width="22" height="22" fill="#003265"/>
<rect x="319" y="439" width="22" height="22" fill="#003468"/>
<rect x="339" y="439" width="22" height="22" fill="#00356b"/>
<rect x="359" y="439" width="22" height="22" fill="#00376e"/>
<rect x="379" y="439" width="22" height="22" fill="#003972"/>
<rect x="399" y="439" width="22" height="22" fill="#003b75"/>
<rect x="419" y="439" width="22" height="22" fill="#003c77"/>
<rect x="439" y="439" width="22" height="22" fill="#003e7a"/>
<rect x="459" y="439" width="22" height="22" fill="#003f7c"/>
<rect x="479" y="439" width="22" height="22" fill="#00417e"/>
<rect x="499" y="439" width="22" height="22" fill="#004381"/>
<rect x="519" y="439" width="22" height="22" fill="#004585"/>
<rect x="539" y="439" width="22" height="22" fill="#004788"/>
<rect x="559" y="439" width="22" height="22" fill="#004a8d"/>
<rect x="579" y="439" width="22" height="22" fill="#004c91"/>
<rect x="599" y="439" width="22" height="22" fill="#005098"/>
<rect x="619" y="439" width="22" height="22" fill="#00549f"/>
<rect x="639" y="439" width="22" height="22" fill="#0058a7"/>
<rect x="659" y="439" width="22" height="22" fill="#005caf"/>
<rect x="679" y="439" width="22" height="22" fill="#0061b8"/>
<rect x="699" y="439" width="22" height="22" fill="#0067c1"/>
<rect x="719" y="439" width="22" height="22" fill="#006cca"/>
<rect x="739" y="439" width="22" height="22" fill="#0072d2"/>
<rect x="759" y="439" width="22" height="22" fill="#0077d9"/>
<rect x="779" y="439" width="22" height="22" fill="#007cdf"/>
<rect x="799" y="439" width="22" height="22" fill="#0080e5"/>
<rect x="819" y="439" width="22" height="22" fill="#0085eb"/>
<rect x="839" y="439" width="22" height="22" fill="#0089ef"/>
<rect x="859" y="439" width="22" height="22" fill="#008df3"/>
<rect x="879" y="439" width="22" height="22" fill="#0092f7"/>
<rect x="899" y="439" width="22" height="22" fill="#0097fa"/>
<rect x="919" y="439" width="22" height="22" fill="#009dfc"/>
<rect x="939" y="439" width="22" height="22" fill="#00a1fc"/>
<rect x="959" y="439" width="22" height="22" fill="#009ef6"/>
<rect x="979" y="439" width="22" height="22" fill="#0091e9"/>
<rect x="999" y="439" width="22" height="22" fill="#007bd0"/>
<rect x="1019" y="439" width="22" height="22" fill="#0060ac"/>
<rect x="1039" y="439" width="22" height="22" fill="#004a8c"/>
<rect x="1059" y="439" width="22" height="22" fill="#003d79"/>
<rect x="1079" y="439" width="22" height="22" fill="#00376f"/>
<rect x="1099" y="439" width="22" height="22" fill="#003469"/>
<rect x="1119" y="439" width="22" height="22" fill="#003266"/>
<rect x="1139" y="439" width="22" height="22" fill="#003264"/>
<rect x="1159" y="439" width="22" height="22" fill="#003263"/>
<rect x="1179" y="439" width="101" height="22" fill="#002f5f"/>
<rect x="-90" y="459" width="111" height="22" fill="#00254c"/>
<rect x="19" y="459" width="22" height="22" fill="#00254a"/>
<rect x="39" y="459" width="22" height="22" fill="#00244a"/>
<rect x="59" y="459" width="22" height="22" fill="#00254b"/>
<rect x="79" y="459" width="22" height="22" fill="#00264e"/>
<rect x="99" y="459" width="22" height="22" fill="#00274f"/>
<rect x="119" y="459" width="22" height="22" fill="#00264e"/>
<rect x="139" y="459" width="22" height="22" fill="#00264f"/>
<rect x="159" y="459" width="22" height="22" fill="#002851"/>
<rect x="179" y="459" width="22" height="22" fill="#002a55"/>
<rect x="199" y="459" width="22" height="22" fill="#002b57"/>
<rect x="219" y="459" width="22" height="22" fill="#002b58"/>
<rect x="239" y="459" width="22" height="22" fill="#002c5a"/>
<rect x="259" y="459" width="22" height="22" fill="#002e5c"/>
<rect x="279" y="459" width="22" height="22" fill="#002f5f"/>
<rect x="299" y="459" width="22" height="22" fill="#003162"/>
<rect x="319" y="459" width="22" height="22" fill="#003265"/>
<rect x="339" y="459" width="22" height="22" fill="#003468"/>
<rect x="359" y="459" width="22" height="22" fill="#00366c"/>
<rect x="379" y="459" width="22" height="22" fill="#003870"/>
<rect x="399" y="459" width="22" height="22" fill="#003a73"/>
<rect x="419" y="459" width="22" height="22" fill="#003b75"/>
<rect x="439" y="459" width="22" height="22" fill="#003d77"/>
<rect x="459" y="459" width="22" height="22" fill="#003e7a"/>
<rect x="479" y="459" width="22" height="22" fill="#00407d"/>
<rect x="499" y="459" width="22" height="22" fill="#00427f"/>
<rect x="519" y="459" width="22" height="22" fill="#004382"/>
<rect x="539" y="459" width="22" height="22" fill="#004585"/>
<rect x="559" y="459" width="22" height="22" fill="#004788"/>
<rect x="579" y="459" width="22" height="22" fill="#004a8c"/>
<rect x="599" y="459" width="22" height="22" fill="#004d92"/>
<rect x="619" y="459" width="22" height="22" fill="#00519a"/>
<rect x="639" y="459" width="22" height="22" fill="#0056a2"/>
<rect x="659" y="459" width="22" height="22" fill="#005bab"/>
<rect x="679" y="459" width="22" height="22" fill="#0060b4"/>
<rect x="699" y="459" width="22" height="22" fill="#0065be"/>
<rect x="719" y="459" width="22" height="22" fill="#006bc7"/>
<rect x="739" y="459" width="22" height="22" fill="#0071cf"/>
<rect x="759" y="459" width="22" height="22" fill="#0076d6"/>
<rect x="779" y="459" width="22" height="22" fill="#007bdd"/>
<rect x="799" y="459" width="22" height="22" fill="#007fe3"/>
<rect x="819" y="459" width="22" height="22" fill="#0084e9"/>
<rect x="839" y="459" width="22" height="22" fill="#0088ee"/>
<rect x="859" y="459" width="22" height="22" fill="#008cf2"/>
<rect x="879" y="459" width="22" height="22" fill="#0090f5"/>
<rect x="899" y="459" width="22" height="22" fill="#0096f9"/>
<rect x="919" y="459" width="22" height="22" fill="#009ffe"/>
<rect x="939" y="459" width="22" height="22" fill="#00a9ff"/>
<rect x="959" y="459" width="22" height="22" fill="#00a6fc"/>
<rect x="979" y="459" width="22" height="22" fill="#0098f3"/>
<rect x="999" y="459" width="22" height="22" fill="#007fd8"/>
<rect x="1019" y="459" width="22" height="22" fill="#005ba7"/>
<rect x="1039" y="459" width="22" height="22" fill="#004484"/>
<rect x="1059" y="459" width="22" height="22" fill="#003a75"/>
<rect x="1079" y="459" width="22" height="22" fill="#00356c"/>
<rect x="1099" y="459" width="22" height="22" fill="#003267"/>
<rect x="1119" y="459" width="22" height="22" fill="#003164"/>
<rect x="1139" y="459" width="22" height="22" fill="#003163"/>
<rect x="1159" y="459" width="22" height="22" fill="#003061"/>
<rect x="1179" y="459" width="101" height="22" fill="#002e5d"/>
<rect x="-90" y="479" width="111" height="22" fill="#00244a"/>
<rect x="19" y="479" width="42" height="22" fill="#002347"/>
<rect x="59" y="479" width="22" height="22" fill="#002348"/>
<rect x="79" y="479" width="22" height="22" fill="#00254b"/>
<rect x="99" y="479" width="22" height="22" fill="#00254c"/>
<rect x="119" y="479" width="42" height="22" fill="#00244a"/>
<rect x="159" y="479" width="22" height="22" fill="#00254d"/>
<rect x="179" y="479" width="22" height="22" fill="#002751"/>
<rect x="199" y="479" width="22" height="22" fill="#002953"/>
<rect x="219" y="479" width="22" height="22" fill="#002954"/>
<rect x="239" y="479" width="22" height="22" fill="#002a55"/>
<rect x="259" y="479" width="22" height="22" fill="#002b58"/>
<rect x="279" y="479" width="22" height="22" fill="#002d5c"/>
<rect x="299" y="479" width="22" height="22" fill="#002e5e"/>
<rect x="319" y="479" width="22" height="22" fill="#003061"/>
<rect x="339" y="479" width="22" height="22" fill="#003264"/>
<rect x="359" y="479" width="22" height="22" fill="#003468"/>
<rect x="379" y="479" width="22" height="22" fill="#00366d"/>
<rect x="399" y="479" width="22" height="22" fill="#003870"/>
<rect x="419" y="479" width="22" height="22" fill="#003972"/>
<rect x="439" y="479" width="22" height="22" fill="#003b74"/>
<rect x="459" y="479" width="22" height="22" fill="#003d77"/>
<rect x="479" y="479" width="22" height="22" fill="#003f7a"/>
<rect x="499" y="479" width="22" height="22" fill="#00407c"/>
<rect x="519" y="479" width="22" height="22" fill="#00417e"/>
<rect x="539" y="479" width="22" height="22" fill="#004380"/>
<rect x="559" y="479" width="22" height="22" fill="#004583"/>
<rect x="579" y="479" width="22" height="22" fill="#004787"/>
<rect x="599" y="479" width="22" height="22" fill="#004a8c"/>
<rect x="619" y="479" width="22" height="22" fill="#004e94"/>
<rect x="639" y="479" width="22" height="22" fill="#00539d"/>
<rect x="659" y="479" width="22" height="22" fill="#0058a6"/>
<rect x="679" y="479" width="22" height="22" fill="#005daf"/>
<rect x="699" y="479" width="22" height="22" fill="#0062b8"/>
<rect x="719" y="479" width="22" height="22" fill="#0068c2"/>
<rect x="739" y="479" width="22" height="22" fill="#006eca"/>
<rect x="759" y="479" width="22" height="22" fill="#0072d0"/>
<rect x="779" y="479" width="22" height="22" fill="#0076d6"/>
<rect x="799" y="479" width="22" height="22" fill="#007bdc"/>
<rect x="819" y="479" width="22" height="22" fill="#007fe2"/>
<rect x="839" y="479" width="22" height="22" fill="#0083e7"/>
<rect x="859" y="479" width="22" height="22" fill="#0086ea"/>
<rect x="879" y="479" width="22" height="22" fill="#0087ec"/>
<rect x="899" y="479" width="22" height="22" fill="#008cf1"/>
<rect x="919" y="479" width="22" height="22" fill="#0093f5"/>
<rect x="939" y="479" width="22" height="22" fill="#009cf8"/>
<rect x="959" y="479" width="22" height="22" fill="#0092ec"/>
<rect x="979" y="479" width="22" height="22" fill="#007cd3"/>
<rect x="999" y="479" width="22" height="22" fill="#0069bf"/>
<rect x="1019" y="479" width="22" height="22" fill="#004d97"/>
<rect x="1039" y="479" width="22" height="22" fill="#003c7a"/>
<rect x="1059" y="479" width="22" height="22" fill="#00366e"/>
<rect x="1079" y="479" width="22" height="22" fill="#003268"/>
<rect x="1099" y="479" width="22" height="22" fill="#003164"/>
<rect x="1119" y="479" width="22" height="22" fill="#003061"/>
<rect x="1139" y="479" width="22" height="22" fill="#002f60"/>
<rect x="1159" y="479" width="22" height="22" fill="#002e5e"/>
<rect x="1179" y="479" width="101" height="22" fill="#002d5b"/>
<rect x="-90" y="499" width="111" height="22" fill="#002144"/>
<rect x="19" y="499" width="22" height="22" fill="#002042"/>
<rect x="39" y="499" width="42" height="22" fill="#002041"/>
<rect x="79" y="499" width="42" height="22" fill="#002144"/>
<rect x="119" y="499" width="22" height="22" fill="#002143"/>
<rect x="139" y="499" width="22" height="22" fill="#002043"/>
<rect x="159" y="499" width="22" height="22" fill="#002246"/>
<rect x="179" y="499" width="22" height="22" fill="#00244a"/>
<rect x="199" y="499" width="22" height="22" fill="#00254c"/>
<rect x="219" y="499" width="22" height="22" fill="#00264e"/>
<rect x="239" y="499" width="22" height="22" fill="#00274f"/>
<rect x="259" y="499" width="22" height="22" fill="#002952"/>
<rect x="279" y="499" width="22" height="22" fill="#002a55"/>
<rect x="299" y="499" width="22" height="22" fill="#002c58"/>
<rect x="319" y="499" width="22" height="22" fill="#002d5b"/>
<rect x="339" y="499" width="22" height="22" fill="#002f5e"/>
<rect x="359" y="499" width="22" height="22" fill="#003163"/>
<rect x="379" y="499" width="22" height="22" fill="#003467"/>
<rect x="399" y="499" width="22" height="22" fill="#00356a"/>
<rect x="419" y="499" width="22" height="22" fill="#00376d"/>
<rect x="439" y="499" width="22" height="22" fill="#00386f"/>
<rect x="459" y="499" width="22" height="22" fill="#003a72"/>
<rect x="479" y="499" width="22" height="22" fill="#003c75"/>
<rect x="499" y="499" width="22" height="22" fill="#003d77"/>
<rect x="519" y="499" width="22" height="22" fill="#003f79"/>
<rect x="539" y="499" width="22" height="22" fill="#00407b"/>
<rect x="559" y="499" width="22" height="22" fill="#00427e"/>
<rect x="579" y="499" width="22" height="22" fill="#004482"/>
<rect x="599" y="499" width="22" height="22" fill="#004787"/>
<rect x="619" y="499" width="22" height="22" fill="#004b8e"/>
<rect x="639" y="499" width="22" height="22" fill="#004f96"/>
<rect x="659" y="499" width="22" height="22" fill="#00549e"/>
<rect x="679" y="499" width="22" height="22" fill="#0059a7"/>
<rect x="699" y="499" width="22" height="22" fill="#005eaf"/>
<rect x="719" y="499" width="22" height="22" fill="#0063b8"/>
<rect x="739" y="499" width="22" height="22" fill="#0067bf"/>
<rect x="759" y="499" width="22" height="22" fill="#006bc5"/>
<rect x="779" y="499" width="22" height="22" fill="#006fcb"/>
<rect x="799" y="499" width="22" height="22" fill="#0072d0"/>
<rect x="819" y="499" width="22" height="22" fill="#0075d5"/>
<rect x="839" y="499" width="22" height="22" fill="#0077d8"/>
<rect x="859" y="499" width="22" height="22" fill="#0077d7"/>
<rect x="879" y="499" width="22" height="22" fill="#0077d8"/>
<rect x="899" y="499" width="22" height="22" fill="#0078dd"/>
<rect x="919" y="499" width="22" height="22" fill="#0079da"/>
<rect x="939" y="499" width="22" height="22" fill="#0076d1"/>
<rect x="959" y="499" width="22" height="22" fill="#0068bd"/>
<rect x="979" y="499" width="22" height="22" fill="#004d95"/>
<rect x="999" y="499" width="22" height="22" fill="#003f80"/>
<rect x="1019" y="499" width="22" height="22" fill="#003c7c"/>
<rect x="1039" y="499" width="22" height="22" fill="#003670"/>
<rect x="1059" y="499" width="22" height="22" fill="#003268"/>
<rect x="1079" y="499" width="22" height="22" fill="#003063"/>
<rect x="1099" y="499" width="22" height="22" fill="#002f60"/>
<rect x="1119" y="499" width="22" height="22" fill="#002e5e"/>
<rect x="1139" y="499" width="22" height="22" fill="#002d5c"/>
<rect x="1159" y="499" width="22" height="22" fill="#002c5a"/>
<rect x="1179" y="499" width="101" height="22" fill="#002b58"/>
<rect x="-90" y="519" width="111" height="22" fill="#001e3e"/>
<rect x="19" y="519" width="22" height="22" fill="#001e3c"/>
<rect x="39" y="519" width="42" height="22" fill="#001d3a"/>
<rect x="79" y="519" width="22" height="22" fill="#001e3c"/>
<rect x="99" y="519" width="62" height="22" fill="#001e3d"/>
<rect x="159" y="519" width="22" height="22" fill="#001f40"/>
<rect x="179" y="519" width="22" height="22" fill="#002144"/>
<rect x="199" y="519" width="22" height="22" fill="#002246"/>
<rect x="219" y="519" width="22" height="22" fill="#002347"/>
<rect x="239" y="519" width="22" height="22" fill="#002448"/>
<rect x="259" y="519" width="22" height="22" fill="#00264c"/>
<rect x="279" y="519" width="22" height="22" fill="#00274f"/>
<rect x="299" y="519" width="22" height="22" fill="#002952"/>
<rect x="319" y="519" width="22" height="22" fill="#002a54"/>
<rect x="339" y="519" width="22" height="22" fill="#002c58"/>
<rect x="359" y="519" width="22" height="22" fill="#002e5c"/>
<rect x="379" y="519" width="22" height="22" fill="#003060"/>
<rect x="399" y="519" width="22" height="22" fill="#003264"/>
<rect x="419" y="519" width="22" height="22" fill="#003467"/>
<rect x="439" y="519" width="22" height="22" fill="#003569"/>
<rect x="459" y="519" width="22" height="22" fill="#00376c"/>
<rect x="479" y="519" width="22" height="22" fill="#00396e"/>
<rect x="499" y="519" width="22" height="22" fill="#003a71"/>
<rect x="519" y="519" width="22" height="22" fill="#003c73"/>
<rect x="539" y="519" width="22" height="22" fill="#003d76"/>
<rect x="559" y="519" width="22" height="22" fill="#003f79"/>
<rect x="579" y="519" width="22" height="22" fill="#00417d"/>
<rect x="599" y="519" width="22" height="22" fill="#004482"/>
<rect x="619" y="519" width="22" height="22" fill="#004788"/>
<rect x="639" y="519" width="22" height="22" fill="#004b8e"/>
<rect x="659" y="519" width="22" height="22" fill="#004f96"/>
<rect x="679" y="519" width="22" height="22" fill="#00539d"/>
<rect x="699" y="519" width="22" height="22" fill="#0057a4"/>
<rect x="719" y="519" width="22" height="22" fill="#005bab"/>
<rect x="739" y="519" width="22" height="22" fill="#005fb1"/>
<rect x="759" y="519" width="22" height="22" fill="#0062b7"/>
<rect x="779" y="519" width="22" height="22" fill="#0065bb"/>
<rect x="799" y="519" width="22" height="22" fill="#0066be"/>
<rect x="819" y="519" width="42" height="22" fill="#0067c1"/>
<rect x="859" y="519" width="22" height="22" fill="#0065bd"/>
<rect x="879" y="519" width="22" height="22" fill="#0062b8"/>
<rect x="899" y="519" width="22" height="22" fill="#005eb3"/>
<rect x="919" y="519" width="22" height="22" fill="#0058a6"/>
<rect x="939" y="519" width="22" height="22" fill="#0056a1"/>
<rect x="959" y="519" width="22" height="22" fill="#004c92"/>
<rect x="979" y="519" width="22" height="22" fill="#003c79"/>
<rect x="999" y="519" width="22" height="22" fill="#00336a"/>
<rect x="1019" y="519" width="22" height="22" fill="#003168"/>
<rect x="1039" y="519" width="22" height="22" fill="#002f64"/>
<rect x="1059" y="519" width="22" height="22" fill="#002e60"/>
<rect x="1079" y="519" width="22" height="22" fill="#002d5e"/>
<rect x="1099" y="519" width="22" height="22" fill="#002d5c"/>
<rect x="1119" y="519" width="22" height="22" fill="#002c5a"/>
<rect x="1139" y="519" width="22" height="22" fill="#002b59"/>
<rect x="1159" y="519" width="22" height="22" fill="#002b57"/>
<rect x="1179" y="519" width="101" height="22" fill="#002a55"/>
<rect x="-90" y="539" width="111" height="22" fill="#001b38"/>
<rect x="19" y="539" width="22" height="22" fill="#001b37"/>
<rect x="39" y="539" width="42" height="22" fill="#001a36"/>
<rect x="79" y="539" width="22" height="22" fill="#001b37"/>
<rect x="99" y="539" width="22" height="22" fill="#001b38"/>
<rect x="119" y="539" width="22" height="22" fill="#001c39"/>
<rect x="139" y="539" width="22" height="22" fill="#001c3a"/>
<rect x="159" y="539" width="22" height="22" fill="#001d3c"/>
<rect x="179" y="539" width="22" height="22" fill="#001e3f"/>
<rect x="199" y="539" width="22" height="22" fill="#002041"/>
<rect x="219" y="539" width="22" height="22" fill="#002143"/>
<rect x="239" y="539" width="22" height="22" fill="#002244"/>
<rect x="259" y="539" width="22" height="22" fill="#002347"/>
<rect x="279" y="539" width="22" height="22" fill="#002549"/>
<rect x="299" y="539" width="22" height="22" fill="#00264c"/>
<rect x="319" y="539" width="22" height="22" fill="#00274e"/>
<rect x="339" y="539" width="22" height="22" fill="#002952"/>
<rect x="359" y="539" width="22" height="22" fill="#002b56"/>
<rect x="379" y="539" width="22" height="22" fill="#002d5a"/>
<rect x="399" y="539" width="22" height="22" fill="#002f5d"/>
<rect x="419" y="539" width="22" height="22" fill="#003060"/>
<rect x="439" y="539" width="22" height="22" fill="#003263"/>
<rect x="459" y="539" width="22" height="22" fill="#003365"/>
<rect x="479" y="539" width="22" height="22" fill="#003568"/>
<rect x="499" y="539" width="22" height="22" fill="#00366a"/>
<rect x="519" y="539" width="22" height="22" fill="#00386d"/>
<rect x="539" y="539" width="22" height="22" fill="#003a70"/>
<rect x="559" y="539" width="22" height="22" fill="#003c73"/>
<rect x="579" y="539" width="22" height="22" fill="#003e77"/>
<rect x="599" y="539" width="22" height="22" fill="#00407b"/>
<rect x="619" y="539" width="22" height="22" fill="#004380"/>
<rect x="639" y="539" width="22" height="22" fill="#004686"/>
<rect x="659" y="539" width="22" height="22" fill="#004a8c"/>
<rect x="679" y="539" width="22" height="22" fill="#004d92"/>
<rect x="699" y="539" width="22" height="22" fill="#005097"/>
<rect x="719" y="539" width="22" height="22" fill="#00539c"/>
<rect x="739" y="539" width="22" height="22" fill="#0055a1"/>
<rect x="759" y="539" width="22" height="22" fill="#0057a4"/>
<rect x="779" y="539" width="22" height="22" fill="#0058a6"/>
<rect x="799" y="539" width="22" height="22" fill="#0058a7"/>
<rect x="819" y="539" width="22" height="22" fill="#0057a6"/>
<rect x="839" y="539" width="22" height="22" fill="#0056a4"/>
<rect x="859" y="539" width="22" height="22" fill="#00529e"/>
<rect x="879" y="539" width="22" height="22" fill="#004e96"/>
<rect x="899" y="539" width="22" height="22" fill="#00488c"/>
<rect x="919" y="539" width="22" height="22" fill="#004382"/>
<rect x="939" y="539" width="22" height="22" fill="#00407c"/>
<rect x="959" y="539" width="22" height="22" fill="#003b74"/>
<rect x="979" y="539" width="22" height="22" fill="#003469"/>
<rect x="999" y="539" width="22" height="22" fill="#002e61"/>
<rect x="1019" y="539" width="22" height="22" fill="#002c5d"/>
<rect x="1039" y="539" width="22" height="22" fill="#002b5b"/>
<rect x="1059" y="539" width="22" height="22" fill="#002b59"/>
<rect x="1079" y="539" width="22" height="22" fill="#002b58"/>
<rect x="1099" y="539" width="22" height="22" fill="#002b57"/>
<rect x="1119" y="539" width="22" height="22" fill="#002a56"/>
<rect x="1139" y="539" width="22" height="22" fill="#002a55"/>
<rect x="1159" y="539" width="22" height="22" fill="#002954"/>
<rect x="1179" y="539" width="101" height="22" fill="#002851"/>
<rect x="-90" y="559" width="111" height="22" fill="#001934"/>
<rect x="19" y="559" width="82" height="22" fill="#001933"/>
<rect x="99" y="559" width="22" height="22" fill="#001934"/>
<rect x="119" y="559" width="22" height="22" fill="#001a36"/>
<rect x="139" y="559" width="22" height="22" fill="#001a37"/>
<rect x="159" y="559" width="22" height="22" fill="#001b39"/>
<rect x="179" y="559" width="22" height="22" fill="#001c3b"/>
<rect x="199" y="559" width="22" height="22" fill="#001e3d"/>
<rect x="219" y="559" width="22" height="22" fill="#001f3f"/>
<rect x="239" y="559" width="22" height="22" fill="#002041"/>
<rect x="259" y="559" width="22" height="22" fill="#002143"/>
<rect x="279" y="559" width="22" height="22" fill="#002245"/>
<rect x="299" y="559" width="22" height="22" fill="#002447"/>
<rect x="319" y="559" width="22" height="22" fill="#00254a"/>
<rect x="339" y="559" width="22" height="22" fill="#00264d"/>
<rect x="359" y="559" width="22" height="22" fill="#002850"/>
<rect x="379" y="559" width="22" height="22" fill="#002a53"/>
<rect x="399" y="559" width="22" height="22" fill="#002b56"/>
<rect x="419" y="559" width="22" height="22" fill="#002d59"/>
<rect x="439" y="559" width="22" height="22" fill="#002e5c"/>
<rect x="459" y="559" width="22" height="22" fill="#00305e"/>
<rect x="479" y="559" width="22" height="22" fill="#003161"/>
<rect x="499" y="559" width="22" height="22" fill="#003363"/>
<rect x="519" y="559" width="22" height="22" fill="#003466"/>
<rect x="539" y="559" width="22" height="22" fill="#003668"/>
<rect x="559" y="559" width="22" height="22" fill="#00376c"/>
<rect x="579" y="559" width="22" height="22" fill="#003a70"/>
<rect x="599" y="559" width="22" height="22" fill="#003c73"/>
<rect x="619" y="559" width="22" height="22" fill="#003e77"/>
<rect x="639" y="559" width="22" height="22" fill="#00417c"/>
<rect x="659" y="559" width="22" height="22" fill="#004380"/>
<rect x="679" y="559" width="22" height="22" fill="#004685"/>
<rect x="699" y="559" width="22" height="22" fill="#00498a"/>
<rect x="719" y="559" width="22" height="22" fill="#004a8d"/>
<rect x="739" y="559" width="22" height="22" fill="#004b8f"/>
<rect x="759" y="559" width="22" height="22" fill="#004c90"/>
<rect x="779" y="559" width="22" height="22" fill="#004b90"/>
<rect x="799" y="559" width="22" height="22" fill="#004a8e"/>
<rect x="819" y="559" width="22" height="22" fill="#00488b"/>
<rect x="839" y="559" width="22" height="22" fill="#004586"/>
<rect x="859" y="559" width="22" height="22" fill="#00407e"/>
<rect x="879" y="559" width="22" height="22" fill="#003d77"/>
<rect x="899" y="559" width="22" height="22" fill="#003970"/>
<rect x="919" y="559" width="22" height="22" fill="#003669"/>
<rect x="939" y="559" width="22" height="22" fill="#003365"/>
<rect x="959" y="559" width="22" height="22" fill="#003161"/>
<rect x="979" y="559" width="22" height="22" fill="#002f5e"/>
<rect x="999" y="559" width="22" height="22" fill="#002c5a"/>
<rect x="1019" y="559" width="22" height="22" fill="#002a56"/>
<rect x="1039" y="559" width="22" height="22" fill="#002954"/>
<rect x="1059" y="559" width="22" height="22" fill="#002853"/>
<rect x="1079" y="559" width="22" height="22" fill="#002852"/>
<rect x="1099" y="559" width="42" height="22" fill="#002851"/>
<rect x="1139" y="559" width="22" height="22" fill="#002750"/>
<rect x="1159" y="559" width="22" height="22" fill="#00274f"/>
<rect x="1179" y="559" width="101" height="22" fill="#00264d"/>
<rect x="-90" y="579" width="191" height="22" fill="#001730"/>
<rect x="99" y="579" width="22" height="22" fill="#001831"/>
<rect x="119" y="579" width="22" height="22" fill="#001833"/>
<rect x="139" y="579" width="22" height="22" fill="#001934"/>
<rect x="159" y="579" width="22" height="22" fill="#001a36"/>
<rect x="179" y="579" width="22" height="22" fill="#001b38"/>
<rect x="199" y="579" width="22" height="22" fill="#001c3a"/>
<rect x="219" y="579" width="22" height="22" fill="#001d3b"/>
<rect x="239" y="579" width="22" height="22" fill="#001e3d"/>
<rect x="259" y="579" width="22" height="22" fill="#001f3f"/>
<rect x="279" y="579" width="22" height="22" fill="#002041"/>
<rect x="299" y="579" width="22" height="22" fill="#002143"/>
<rect x="319" y="579" width="22" height="22" fill="#002345"/>
<rect x="339" y="579" width="22" height="22" fill="#002448"/>
<rect x="359" y="579" width="22" height="22" fill="#00254b"/>
<rect x="379" y="579" width="22" height="22" fill="#00274d"/>
<rect x="399" y="579" width="22" height="22" fill="#002850"/>
<rect x="419" y="579" width="22" height="22" fill="#002953"/>
<rect x="439" y="579" width="22" height="22" fill="#002b55"/>
<rect x="459" y="579" width="22" height="22" fill="#002c57"/>
<rect x="479" y="579" width="22" height="22" fill="#002d59"/>
<rect x="499" y="579" width="22" height="22" fill="#002f5c"/>
<rect x="519" y="579" width="22" height="22" fill="#00305e"/>
<rect x="539" y="579" width="22" height="22" fill="#003161"/>
<rect x="559" y="579" width="22" height="22" fill="#003364"/>
<rect x="579" y="579" width="22" height="22" fill="#003567"/>
<rect x="599" y="579" width="22" height="22" fill="#00366a"/>
<rect x="619" y="579" width="22" height="22" fill="#00386d"/>
<rect x="639" y="579" width="22" height="22" fill="#003a71"/>
<rect x="659" y="579" width="22" height="22" fill="#003d74"/>
<rect x="679" y="579" width="22" height="22" fill="#003f78"/>
<rect x="699" y="579" width="22" height="22" fill="#00407b"/>
<rect x="719" y="579" width="22" height="22" fill="#00417d"/>
<rect x="739" y="579" width="22" height="22" fill="#00417e"/>
<rect x="759" y="579" width="22" height="22" fill="#00417d"/>
<rect x="779" y="579" width="22" height="22" fill="#003f7b"/>
<rect x="799" y="579" width="22" height="22" fill="#003d77"/>
<rect x="819" y="579" width="22" height="22" fill="#003971"/>
<rect x="839" y="579" width="22" height="22" fill="#00366b"/>
<rect x="859" y="579" width="22" height="22" fill="#003467"/>
<rect x="879" y="579" width="22" height="22" fill="#003162"/>
<rect x="899" y="579" width="22" height="22" fill="#002f5d"/>
<rect x="919" y="579" width="22" height="22" fill="#002d59"/>
<rect x="939" y="579" width="22" height="22" fill="#002c57"/>
<rect x="959" y="579" width="22" height="22" fill="#002b56"/>
<rect x="979" y="579" width="22" height="22" fill="#002a55"/>
<rect x="999" y="579" width="22" height="22" fill="#002953"/>
<rect x="1019" y="579" width="22" height="22" fill="#002850"/>
<rect x="1039" y="579" width="22" height="22" fill="#00274e"/>
<rect x="1059" y="579" width="22" height="22" fill="#00264d"/>
<rect x="1079" y="579" width="22" height="22" fill="#00264c"/>
<rect x="1099" y="579" width="22" height="22" fill="#00254c"/>
<rect x="1119" y="579" width="42" height="22" fill="#00254b"/>
<rect x="1159" y="579" width="22" height="22" fill="#00254a"/>
<rect x="1179" y="579" width="101" height="22" fill="#002449"/>
<rect x="-90" y="599" width="151" height="22" fill="#00152d"/>
<rect x="59" y="599" width="42" height="22" fill="#00162e"/>
<rect x="99" y="599" width="22" height="22" fill="#00162f"/>
<rect x="119" y="599" width="22" height="22" fill="#001731"/>
<rect x="139" y="599" width="22" height="22" fill="#001832"/>
<rect x="159" y="599" width="22" height="22" fill="#001934"/>
<rect x="179" y="599" width="22" height="22" fill="#001a35"/>
<rect x="199" y="599" width="22" height="22" fill="#001b37"/>
<rect x="219" y="599" width="22" height="22" fill="#001c38"/>
<rect x="239" y="599" width="22" height="22" fill="#001c3a"/>
<rect x="259" y="599" width="22" height="22" fill="#001d3b"/>
<rect x="279" y="599" width="22" height="22" fill="#001e3d"/>
<rect x="299" y="599" width="22" height="22" fill="#001f3f"/>
<rect x="319" y="599" width="22" height="22" fill="#002041"/>
<rect x="339" y="599" width="22" height="22" fill="#002143"/>
<rect x="359" y="599" width="22" height="22" fill="#002345"/>
<rect x="379" y="599" width="22" height="22" fill="#002447"/>
<rect x="399" y="599" width="22" height="22" fill="#00254a"/>
<rect x="419" y="599" width="22" height="22" fill="#00264c"/>
<rect x="439" y="599" width="22" height="22" fill="#00274e"/>
<rect x="459" y="599" width="22" height="22" fill="#002850"/>
<rect x="479" y="599" width="22" height="22" fill="#002952"/>
<rect x="499" y="599" width="22" height="22" fill="#002b54"/>
<rect x="519" y="599" width="22" height="22" fill="#002c56"/>
<rect x="539" y="599" width="22" height="22" fill="#002d59"/>
<rect x="559" y="599" width="22" height="22" fill="#002e5b"/>
<rect x="579" y="599" width="22" height="22" fill="#002f5d"/>
<rect x="599" y="599" width="22" height="22" fill="#003160"/>
<rect x="619" y="599" width="22" height="22" fill="#003363"/>
<rect x="639" y="599" width="22" height="22" fill="#003466"/>
<rect x="659" y="599" width="22" height="22" fill="#003668"/>
<rect x="679" y="599" width="22" height="22" fill="#00376a"/>
<rect x="699" y="599" width="22" height="22" fill="#00386c"/>
<rect x="719" y="599" width="42" height="22" fill="#00386d"/>
<rect x="759" y="599" width="22" height="22" fill="#00376b"/>
<rect x="779" y="599" width="22" height="22" fill="#003568"/>
<rect x="799" y="599" width="22" height="22" fill="#003264"/>
<rect x="819" y="599" width="22" height="22" fill="#002f5d"/>
<rect x="839" y="599" width="22" height="22" fill="#002c58"/>
<rect x="859" y="599" width="22" height="22" fill="#002b56"/>
<rect x="879" y="599" width="22" height="22" fill="#002953"/>
<rect x="899" y="599" width="22" height="22" fill="#002850"/>
<rect x="919" y="599" width="42" height="22" fill="#00274e"/>
<rect x="959" y="599" width="22" height="22" fill="#00274d"/>
<rect x="979" y="599" width="22" height="22" fill="#00264c"/>
<rect x="999" y="599" width="22" height="22" fill="#00264b"/>
<rect x="1019" y="599" width="22" height="22" fill="#00254a"/>
<rect x="1039" y="599" width="22" height="22" fill="#002448"/>
<rect x="1059" y="599" width="22" height="22" fill="#002447"/>
<rect x="1079" y="599" width="22" height="22" fill="#002347"/>
<rect x="1099" y="599" width="62" height="22" fill="#002346"/>
<rect x="1159" y="599" width="22" height="22" fill="#002345"/>
<rect x="1179" y="599" width="101" height="22" fill="#002244"/>
<rect x="-90" y="619" width="171" height="22" fill="#00142b"/>
<rect x="79" y="619" width="22" height="22" fill="#00142c"/>
<rect x="99" y="619" width="22" height="22" fill="#00152d"/>
<rect x="119" y="619" width="22" height="22" fill="#00162e"/>
<rect x="139" y="619" width="22" height="22" fill="#001730"/>
<rect x="159" y="619" width="22" height="22" fill="#001731"/>
<rect x="179" y="619" width="22" height="22" fill="#001833"/>
<rect x="199" y="619" width="22" height="22" fill="#001935"/>
<rect x="219" y="619" width="22" height="22" fill="#001a36"/>
<rect x="239" y="619" width="22" height="22" fill="#001b37"/>
<rect x="259" y="619" width="22" height="22" fill="#001c38"/>
<rect x="279" y="619" width="22" height="22" fill="#001d39"/>
<rect x="299" y="619" width="22" height="22" fill="#001d3b"/>
<rect x="319" y="619" width="22" height="22" fill="#001e3d"/>
<rect x="339" y="619" width="22" height="22" fill="#001f3e"/>
<rect x="359" y="619" width="22" height="22" fill="#002040"/>
<rect x="379" y="619" width="22" height="22" fill="#002142"/>
<rect x="399" y="619" width="22" height="22" fill="#002244"/>
<rect x="419" y="619" width="22" height="22" fill="#002346"/>
<rect x="439" y="619" width="22" height="22" fill="#002448"/>
<rect x="459" y="619" width="22" height="22" fill="#002549"/>
<rect x="479" y="619" width="22" height="22" fill="#00264b"/>
<rect x="499" y="619" width="22" height="22" fill="#00264d"/>
<rect x="519" y="619" width="22" height="22" fill="#00284f"/>
<rect x="539" y="619" width="22" height="22" fill="#002951"/>
<rect x="559" y="619" width="22" height="22" fill="#002952"/>
<rect x="579" y="619" width="22" height="22" fill="#002a54"/>
<rect x="599" y="619" width="22" height="22" fill="#002b56"/>
<rect x="619" y="619" width="22" height="22" fill="#002d58"/>
<rect x="639" y="619" width="22" height="22" fill="#002e5b"/>
<rect x="659" y="619" width="22" height="22" fill="#002f5c"/>
<rect x="679" y="619" width="22" height="22" fill="#002f5d"/>
<rect x="699" y="619" width="22" height="22" fill="#00305e"/>
<rect x="719" y="619" width="42" height="22" fill="#00305f"/>
<rect x="759" y="619" width="22" height="22" fill="#002f5d"/>
<rect x="779" y="619" width="22" height="22" fill="#002d5a"/>
<rect x="799" y="619" width="22" height="22" fill="#002b55"/>
<rect x="819" y="619" width="22" height="22" fill="#002850"/>
<rect x="839" y="619" width="22" height="22" fill="#00264b"/>
<rect x="859" y="619" width="22" height="22" fill="#002449"/>
<rect x="879" y="619" width="22" height="22" fill="#002448"/>
<rect x="899" y="619" width="62" height="22" fill="#002347"/>
<rect x="959" y="619" width="22" height="22" fill="#002346"/>
<rect x="979" y="619" width="22" height="22" fill="#002345"/>
<rect x="999" y="619" width="22" height="22" fill="#002245"/>
<rect x="1019" y="619" width="22" height="22" fill="#002244"/>
<rect x="1039" y="619" width="22" height="22" fill="#002143"/>
<rect x="1059" y="619" width="22" height="22" fill="#002142"/>
<rect x="1079" y="619" width="22" height="22" fill="#002141"/>
<rect x="1099" y="619" width="62" height="22" fill="#002041"/>
<rect x="1159" y="619" width="22" height="22" fill="#002040"/>
<rect x="1179" y="619" width="101" height="22" fill="#001f40"/>
<rect x="-90" y="639" width="171" height="22" fill="#001329"/>
<rect x="79" y="639" width="22" height="22" fill="#00132a"/>
<rect x="99" y="639" width="22" height="22" fill="#00142b"/>
<rect x="119" y="639" width="22" height="22" fill="#00152c"/>
<rect x="139" y="639" width="22" height="22" fill="#00152e"/>
<rect x="159" y="639" width="22" height="22" fill="#00162f"/>
<rect x="179" y="639" width="22" height="22" fill="#001731"/>
<rect x="199" y="639" width="22" height="22" fill="#001832"/>
<rect x="219" y="639" width="22" height="22" fill="#001933"/>
<rect x="239" y="639" width="22" height="22" fill="#001934"/>
<rect x="259" y="639" width="22" height="22" fill="#001a35"/>
<rect x="279" y="639" width="22" height="22" fill="#001b36"/>
<rect x="299" y="639" width="22" height="22" fill="#001b37"/>
<rect x="319" y="639" width="22" height="22" fill="#001c39"/>
<rect x="339" y="639" width="22" height="22" fill="#001d3a"/>
<rect x="359" y="639" width="22" height="22" fill="#001d3b"/>
<rect x="379" y="639" width="22" height="22" fill="#001e3d"/>
<rect x="399" y="639" width="22" height="22" fill="#001f3e"/>
<rect x="419" y="639" width="22" height="22" fill="#002040"/>
<rect x="439" y="639" width="22" height="22" fill="#002142"/>
<rect x="459" y="639" width="22" height="22" fill="#002143"/>
<rect x="479" y="639" width="22" height="22" fill="#002244"/>
<rect x="499" y="639" width="22" height="22" fill="#002346"/>
<rect x="519" y="639" width="22" height="22" fill="#002447"/>
<rect x="539" y="639" width="22" height="22" fill="#002449"/>
<rect x="559" y="639" width="22" height="22" fill="#00254a"/>
<rect x="579" y="639" width="22" height="22" fill="#00264c"/>
<rect x="599" y="639" width="22" height="22" fill="#00264d"/>
<rect x="619" y="639" width="22" height="22" fill="#00274f"/>
<rect x="639" y="639" width="22" height="22" fill="#002850"/>
<rect x="659" y="639" width="42" height="22" fill="#002951"/>
<rect x="699" y="639" width="62" height="22" fill="#002952"/>
<rect x="759" y="639" width="22" height="22" fill="#002850"/>
<rect x="779" y="639" width="22" height="22" fill="#00274e"/>
<rect x="799" y="639" width="22" height="22" fill="#00254a"/>
<rect x="819" y="639" width="22" height="22" fill="#002346"/>
<rect x="839" y="639" width="22" height="22" fill="#002143"/>
<rect x="859" y="639" width="42" height="22" fill="#002041"/>
<rect x="899" y="639" width="42" height="22" fill="#002040"/>
<rect x="939" y="639" width="22" height="22" fill="#002041"/>
<rect x="959" y="639" width="22" height="22" fill="#002040"/>
<rect x="979" y="639" width="42" height="22" fill="#001f3f"/>
<rect x="1019" y="639" width="22" height="22" fill="#001f3e"/>
<rect x="1039" y="639" width="42" height="22" fill="#001e3d"/>
<rect x="1079" y="639" width="42" height="22" fill="#001e3c"/>
<rect x="1119" y="639" width="22" height="22" fill="#001d3c"/>
<rect x="1139" y="639" width="141" height="22" fill="#001d3b"/>
<rect x="-90" y="659" width="111" height="22" fill="#001327"/>
<rect x="19" y="659" width="62" height="22" fill="#001227"/>
<rect x="79" y="659" width="22" height="22" fill="#001328"/>
<rect x="99" y="659" width="22" height="22" fill="#001329"/>
<rect x="119" y="659" width="22" height="22" fill="#00142a"/>
<rect x="139" y="659" width="22" height="22" fill="#00142b"/>
<rect x="159" y="659" width="22" height="22" fill="#00152d"/>
<rect x="179" y="659" width="22" height="22" fill="#00162e"/>
<rect x="199" y="659" width="22" height="22" fill="#00172f"/>
<rect x="219" y="659" width="22" height="22" fill="#001730"/>
<rect x="239" y="659" width="22" height="22" fill="#001831"/>
<rect x="259" y="659" width="22" height="22" fill="#001832"/>
<rect x="279" y="659" width="22" height="22" fill="#001933"/>
<rect x="299" y="659" width="22" height="22" fill="#001934"/>
<rect x="319" y="659" width="22" height="22" fill="#001a35"/>
<rect x="339" y="659" width="22" height="22" fill="#001a36"/>
<rect x="359" y="659" width="22" height="22" fill="#001b37"/>
<rect x="379" y="659" width="22" height="22" fill="#001c38"/>
<rect x="399" y="659" width="22" height="22" fill="#001c39"/>
<rect x="419" y="659" width="22" height="22" fill="#001d3b"/>
<rect x="439" y="659" width="22" height="22" fill="#001d3c"/>
<rect x="459" y="659" width="22" height="22" fill="#001e3d"/>
<rect x="479" y="659" width="22" height="22" fill="#001f3e"/>
<rect x="499" y="659" width="22" height="22" fill="#001f3f"/>
<rect x="519" y="659" width="22" height="22" fill="#002041"/>
<rect x="539" y="659" width="22" height="22" fill="#002142"/>
<rect x="559" y="659" width="22" height="22" fill="#002143"/>
<rect x="579" y="659" width="22" height="22" fill="#002244"/>
<rect x="599" y="659" width="22" height="22" fill="#002245"/>
<rect x="619" y="659" width="22" height="22" fill="#002346"/>
<rect x="639" y="659" width="62" height="22" fill="#002347"/>
<rect x="699" y="659" width="22" height="22" fill="#002348"/>
<rect x="719" y="659" width="42" height="22" fill="#002347"/>
<rect x="759" y="659" width="22" height="22" fill="#002246"/>
<rect x="779" y="659" width="22" height="22" fill="#002144"/>
<rect x="799" y="659" width="22" height="22" fill="#002041"/>
<rect x="819" y="659" width="22" height="22" fill="#001f3f"/>
<rect x="839" y="659" width="22" height="22" fill="#001e3d"/>
<rect x="859" y="659" width="102" height="22" fill="#001d3b"/>
<rect x="959" y="659" width="22" height="22" fill="#001d3a"/>
<rect x="979" y="659" width="22" height="22" fill="#001c3a"/>
<rect x="999" y="659" width="22" height="22" fill="#001c39"/>
<rect x="1019" y="659" width="22" height="22" fill="#001c38"/>
<rect x="1039" y="659" width="22" height="22" fill="#001b38"/>
<rect x="1059" y="659" width="221" height="22" fill="#001b37"/>
<rect x="-90" y="679" width="111" height="22" fill="#001226"/>
<rect x="19" y="679" width="42" height="22" fill="#001225"/>
<rect x="59" y="679" width="42" height="22" fill="#001226"/>
<rect x="99" y="679" width="22" height="22" fill="#001227"/>
<rect x="119" y="679" width="22" height="22" fill="#001328"/>
<rect x="139" y="679" width="22" height="22" fill="#001329"/>
<rect x="159" y="679" width="22" height="22" fill="#00142a"/>
<rect x="179" y="679" width="22" height="22" fill="#00142b"/>
<rect x="199" y="679" width="22" height="22" fill="#00152c"/>
<rect x="219" y="679" width="22" height="22" fill="#00162d"/>
<rect x="239" y="679" width="42" height="22" fill="#00162e"/>
<rect x="279" y="679" width="22" height="22" fill="#00172f"/>
<rect x="299" y="679" width="22" height="22" fill="#001730"/>
<rect x="319" y="679" width="22" height="22" fill="#001831"/>
<rect x="339" y="679" width="22" height="22" fill="#001832"/>
<rect x="359" y="679" width="22" height="22" fill="#001933"/>
<rect x="379" y="679" width="22" height="22" fill="#001934"/>
<rect x="399" y="679" width="22" height="22" fill="#001a35"/>
<rect x="419" y="679" width="22" height="22" fill="#001a36"/>
<rect x="439" y="679" width="22" height="22" fill="#001b37"/>
<rect x="459" y="679" width="42" height="22" fill="#001b38"/>
<rect x="499" y="679" width="22" height="22" fill="#001c39"/>
<rect x="519" y="679" width="22" height="22" fill="#001d3b"/>
<rect x="539" y="679" width="22" height="22" fill="#001d3c"/>
<rect x="559" y="679" width="22" height="22" fill="#001e3d"/>
<rect x="579" y="679" width="142" height="22" fill="#001e3e"/>
<rect x="719" y="679" width="42" height="22" fill="#001e3d"/>
<rect x="759" y="679" width="22" height="22" fill="#001d3d"/>
<rect x="779" y="679" width="22" height="22" fill="#001d3c"/>
<rect x="799" y="679" width="22" height="22" fill="#001c3a"/>
<rect x="819" y="679" width="22" height="22" fill="#001b39"/>
<rect x="839" y="679" width="82" height="22" fill="#001b37"/>
<rect x="919" y="679" width="22" height="22" fill="#001a37"/>
<rect x="939" y="679" width="42" height="22" fill="#001a36"/>
<rect x="979" y="679" width="22" height="22" fill="#001a35"/>
<rect x="999" y="679" width="42" height="22" fill="#001934"/>
<rect x="1039" y="679" width="22" height="22" fill="#001833"/>
<rect x="1059" y="679" width="22" height="22" fill="#001832"/>
<rect x="1079" y="679" width="82" height="22" fill="#001933"/>
<rect x="1159" y="679" width="22" height="22" fill="#001832"/>
<rect x="1179" y="679" width="101" height="22" fill="#001933"/>
<rect x="-90" y="699" width="171" height="22" fill="#001124"/>
<rect x="79" y="699" width="42" height="22" fill="#001125"/>
<rect x="119" y="699" width="22" height="22" fill="#001226"/>
<rect x="139" y="699" width="22" height="22" fill="#001227"/>
<rect x="159" y="699" width="42" height="22" fill="#001328"/>
<rect x="199" y="699" width="22" height="22" fill="#001429"/>
<rect x="219" y="699" width="22" height="22" fill="#00142a"/>
<rect x="239" y="699" width="22" height="22" fill="#00142b"/>
<rect x="259" y="699" width="42" height="22" fill="#00152c"/>
<rect x="299" y="699" width="22" height="22" fill="#00152d"/>
<rect x="319" y="699" width="42" height="22" fill="#00162e"/>
<rect x="359" y="699" width="22" height="22" fill="#00172f"/>
<rect x="379" y="699" width="22" height="22" fill="#001730"/>
<rect x="399" y="699" width="22" height="22" fill="#001731"/>
<rect x="419" y="699" width="42" height="22" fill="#001832"/>
<rect x="459" y="699" width="22" height="22" fill="#001833"/>
<rect x="479" y="699" width="42" height="22" fill="#001934"/>
<rect x="519" y="699" width="22" height="22" fill="#001a35"/>
<rect x="539" y="699" width="22" height="22" fill="#001a36"/>
<rect x="559" y="699" width="42" height="22" fill="#001b37"/>
<rect x="599" y="699" width="22" height="22" fill="#001b38"/>
<rect x="619" y="699" width="22" height="22" fill="#001b37"/>
<rect x="639" y="699" width="22" height="22" fill="#001a37"/>
<rect x="659" y="699" width="22" height="22" fill="#001a35"/>
<rect x="679" y="699" width="42" height="22" fill="#001833"/>
<rect x="719" y="699" width="82" height="22" fill="#001935"/>
<rect x="799" y="699" width="22" height="22" fill="#001934"/>
<rect x="819" y="699" width="102" height="22" fill="#001833"/>
<rect x="919" y="699" width="42" height="22" fill="#001832"/>
<rect x="959" y="699" width="22" height="22" fill="#001831"/>
<rect x="979" y="699" width="22" height="22" fill="#001731"/>
<rect x="999" y="699" width="42" height="22" fill="#001730"/>
<rect x="1039" y="699" width="42" height="22" fill="#00162f"/>
<rect x="1079" y="699" width="22" height="22" fill="#00172f"/>
<rect x="1099" y="699" width="82" height="22" fill="#001730"/>
<rect x="1179" y="699" width="101" height="22" fill="#001731"/>
<rect x="-90" y="719" width="191" height="22" fill="#001023"/>
<rect x="99" y="719" width="42" height="22" fill="#001124"/>
<rect x="139" y="719" width="22" height="22" fill="#001125"/>
<rect x="159" y="719" width="42" height="22" fill="#001226"/>
<rect x="199" y="719" width="22" height="22" fill="#001227"/>
<rect x="219" y="719" width="42" height="22" fill="#001328"/>
<rect x="259" y="719" width="22" height="22" fill="#001329"/>
<rect x="279" y="719" width="22" height="22" fill="#001429"/>
<rect x="299" y="719" width="22" height="22" fill="#00142a"/>
<rect x="319" y="719" width="42" height="22" fill="#00142b"/>
<rect x="359" y="719" width="42" height="22" fill="#00152c"/>
<rect x="399" y="719" width="22" height="22" fill="#00152d"/>
<rect x="419" y="719" width="42" height="22" fill="#00162e"/>
<rect x="459" y="719" width="42" height="22" fill="#00162f"/>
<rect x="499" y="719" width="22" height="22" fill="#001730"/>
<rect x="519" y="719" width="22" height="22" fill="#001731"/>
<rect x="539" y="719" width="22" height="22" fill="#001831"/>
<rect x="559" y="719" width="62" height="22" fill="#001832"/>
<rect x="619" y="719" width="22" height="22" fill="#001831"/>
<rect x="639" y="719" width="22" height="22" fill="#001730"/>
<rect x="659" y="719" width="22" height="22" fill="#00162f"/>
<rect x="679" y="719" width="22" height="22" fill="#00162e"/>
<rect x="699" y="719" width="22" height="22" fill="#00152d"/>
<rect x="719" y="719" width="22" height="22" fill="#00162e"/>
<rect x="739" y="719" width="82" height="22" fill="#00162f"/>
<rect x="819" y="719" width="62" height="22" fill="#00162e"/>
<rect x="879" y="719" width="22" height="22" fill="#00162f"/>
<rect x="899" y="719" width="62" height="22" fill="#00162e"/>
<rect x="959" y="719" width="42" height="22" fill="#00152d"/>
<rect x="999" y="719" width="102" height="22" fill="#00152c"/>
<rect x="1099" y="719" width="42" height="22" fill="#00152d"/>
<rect x="1139" y="719" width="42" height="22" fill="#00162e"/>
<rect x="1179" y="719" width="101" height="22" fill="#00172f"/>
<rect x="-90" y="739" width="111" height="99" fill="#001022"/>
<rect x="19" y="739" width="42" height="99" fill="#001021"/>
<rect x="59" y="739" width="62" height="99" fill="#001022"/>
<rect x="119" y="739" width="42" height="99" fill="#001023"/>
<rect x="159" y="739" width="42" height="99" fill="#001124"/>
<rect x="199" y="739" width="42" height="99" fill="#001125"/>
<rect x="239" y="739" width="42" height="99" fill="#001226"/>
<rect x="279" y="739" width="42" height="99" fill="#001227"/>
<rect x="319" y="739" width="42" height="99" fill="#001328"/>
<rect x="359" y="739" width="42" height="99" fill="#001329"/>
<rect x="399" y="739" width="42" height="99" fill="#00142a"/>
<rect x="439" y="739" width="42" height="99" fill="#00142b"/>
<rect x="479" y="739" width="22" height="99" fill="#00142c"/>
<rect x="499" y="739" width="22" height="99" fill="#00152c"/>
<rect x="519" y="739" width="62" height="99" fill="#00152d"/>
<rect x="579" y="739" width="22" height="99" fill="#00162d"/>
<rect x="599" y="739" width="22" height="99" fill="#00152d"/>
<rect x="619" y="739" width="22" height="99" fill="#00152c"/>
<rect x="639" y="739" width="22" height="99" fill="#00142b"/>
<rect x="659" y="739" width="22" height="99" fill="#00142a"/>
<rect x="679" y="739" width="62" height="99" fill="#001329"/>
<rect x="739" y="739" width="42" height="99" fill="#00132a"/>
<rect x="779" y="739" width="182" height="99" fill="#00142a"/>
<rect x="959" y="739" width="42" height="99" fill="#00132a"/>
<rect x="999" y="739" width="82" height="99" fill="#001329"/>
<rect x="1079" y="739" width="42" height="99" fill="#00142a"/>
<rect x="1119" y="739" width="22" height="99" fill="#00142b"/>
<rect x="1139" y="739" width="42" height="99" fill="#00152c"/>
<rect x="1179" y="739" width="101" height="99" fill="#00162d"/>
</g>
<defs>
  <linearGradient id="gPaneTR" x1="851" y1="0" x2="1029" y2="0" gradientUnits="userSpaceOnUse">
    <stop offset="0" stop-color="#48c4ff"/>
    <stop offset="0.5" stop-color="#6ed0ff"/>
    <stop offset="1" stop-color="#a4deff"/>
  </linearGradient>
  <linearGradient id="gPaneTR2" x1="851" y1="0" x2="1029" y2="0" gradientUnits="userSpaceOnUse">
    <stop offset="0" stop-color="#00b8ff"/>
    <stop offset="0.5" stop-color="#28c2ff"/>
    <stop offset="1" stop-color="#5cccff"/>
  </linearGradient>
  <linearGradient id="gPaneBR" x1="850" y1="0" x2="1028" y2="0" gradientUnits="userSpaceOnUse">
    <stop offset="0" stop-color="#44c2ff"/>
    <stop offset="0.5" stop-color="#68ceff"/>
    <stop offset="1" stop-color="#a8deff"/>
  </linearGradient>
  <linearGradient id="gPaneBR2" x1="851" y1="0" x2="1029" y2="0" gradientUnits="userSpaceOnUse">
    <stop offset="0" stop-color="#00b6ff"/>
    <stop offset="0.5" stop-color="#28c2ff"/>
    <stop offset="1" stop-color="#60ccff"/>
  </linearGradient>
  <linearGradient id="gBU" x1="1029" y1="0" x2="470" y2="0" gradientUnits="userSpaceOnUse">
    <stop offset="0" stop-color="#009afc"/>
    <stop offset="0.12" stop-color="#0098fc"/>
    <stop offset="0.2" stop-color="#0096fa"/>
    <stop offset="0.3" stop-color="#0084ea"/>
    <stop offset="0.4" stop-color="#007ee4"/>
    <stop offset="0.48" stop-color="#0068c4"/>
    <stop offset="0.57" stop-color="#005eb0"/>
    <stop offset="0.75" stop-color="#004e94"/>
    <stop offset="0.86" stop-color="#004486" stop-opacity="0.9"/>
    <stop offset="1" stop-color="#003468" stop-opacity="0"/>
  </linearGradient>
  <linearGradient id="gStk" x1="1029" y1="0" x2="560" y2="0" gradientUnits="userSpaceOnUse">
    <stop offset="0" stop-color="#ffffff" stop-opacity="1"/>
    <stop offset="0.06" stop-color="#b0e8ff" stop-opacity="0.95"/>
    <stop offset="0.15" stop-color="#40c8ff" stop-opacity="0.9"/>
    <stop offset="0.3" stop-color="#00a4ff" stop-opacity="0.8"/>
    <stop offset="0.55" stop-color="#0080e0" stop-opacity="0.7"/>
    <stop offset="1" stop-color="#0060b4" stop-opacity="0.5"/>
  </linearGradient>
  <linearGradient id="gStk2" x1="1029" y1="0" x2="900" y2="0" gradientUnits="userSpaceOnUse">
    <stop offset="0" stop-color="#ffffff" stop-opacity="1"/>
    <stop offset="0.3" stop-color="#c8f0ff" stop-opacity="0.85"/>
    <stop offset="0.7" stop-color="#70d4ff" stop-opacity="0.5"/>
    <stop offset="1" stop-color="#30b8ff" stop-opacity="0"/>
  </linearGradient>
  <radialGradient id="gFan" cx="1029" cy="139" r="100" gradientUnits="userSpaceOnUse">
    <stop offset="0" stop-color="#30c0ff" stop-opacity="1"/>
    <stop offset="0.25" stop-color="#00a8ff" stop-opacity="0.8"/>
    <stop offset="0.6" stop-color="#0090f4" stop-opacity="0.4"/>
    <stop offset="1" stop-color="#0080e0" stop-opacity="0"/>
  </radialGradient>
  <linearGradient id="gEdgeV" x1="0" y1="162" x2="0" y2="440" gradientUnits="userSpaceOnUse">
    <stop offset="0" stop-color="#fff" stop-opacity="1"/>
    <stop offset="0.3" stop-color="#fff" stop-opacity="0.75"/>
    <stop offset="0.65" stop-color="#fff" stop-opacity="1"/>
    <stop offset="1" stop-color="#fff" stop-opacity="0.7"/>
  </linearGradient>
  <filter id="b1" color-interpolation-filters="sRGB"><feGaussianBlur stdDeviation="0.6"/></filter>
  <filter id="b15" x="-20%" y="-100%" width="140%" height="300%" color-interpolation-filters="sRGB"><feGaussianBlur stdDeviation="1.3"/></filter>
  <filter id="b2" x="-20%" y="-50%" width="140%" height="200%" color-interpolation-filters="sRGB"><feGaussianBlur stdDeviation="2"/></filter>
  <filter id="b3" x="-50%" y="-50%" width="200%" height="200%" color-interpolation-filters="sRGB"><feGaussianBlur stdDeviation="3"/></filter>
  <filter id="b5" x="-20%" y="-50%" width="140%" height="200%" color-interpolation-filters="sRGB"><feGaussianBlur stdDeviation="4"/></filter>
</defs>
<!-- dark band on the left -->
<polygon points="-10,285.500 160,285.500 160,308 -10,308" fill="#001a36" opacity="0.96" filter="url(#b15)"/>
<!-- light streaks on the left -->
<line x1="-5" y1="95" x2="152" y2="113.500" stroke="#0a60b0" stroke-width="3" opacity="0.55" filter="url(#b15)"/>
<line x1="-5" y1="499.500" x2="250" y2="473" stroke="#0a4c90" stroke-width="3" opacity="0.35" filter="url(#b2)"/>
<!-- upper beam body -->
<polygon points="1029.600,139 470,0 470,320 1029,320" fill="url(#gBU)" filter="url(#b2)"/>
<!-- upper streak -->
<polygon points="1030,139.500 560,20 560,26" fill="url(#gStk)" filter="url(#b15)"/>
<polygon points="1031,140 880,100 890,60 940,45" fill="url(#gFan)" filter="url(#b5)"/>
<polygon points="1030,136.500 1030,141 900,109.500 900,105.500" fill="url(#gStk2)" filter="url(#b15)"/>
<!-- frame (dark parts of logo) -->
<polygon points="788,170 838.500,163 851,161.600 1029.600,139 1027.500,464 850,440 838,439 788,433" fill="#0078dc"/>
<polygon points="788,294.800 1029,294.800 1029,306 788,306" fill="#004e9c"/>
<!-- panes -->
<polygon points="788,170 838.500,163 838.500,294.500 788,294.500" fill="#00a6f8"/>
<polygon points="788,170 838.500,163 838.500,199 788,192.500" fill="#0096f0"/>
<polygon points="788,306 838,306 838,439 788,433" fill="#00a2f6"/>
<polygon points="788,409.500 838,404 838,439 788,433" fill="#0090ea"/>
<polygon points="851,161.600 1029.600,139 1029,294.800 850.500,294.800" fill="url(#gPaneTR)"/>
<polygon points="851,161.600 1029.600,139 1029,225 851,201.500" fill="url(#gPaneTR2)"/>
<polygon points="851,161.600 1029.600,139 1029,197 851,166.800" fill="#0094f5"/>
<polygon points="850.500,306 1028.500,306 1027.500,464 850,440" fill="url(#gPaneBR)"/>
<polygon points="850.500,401.500 1028,380.300 1027.500,464 850,440" fill="url(#gPaneBR2)"/>
<polygon points="850,432.500 1028,409.400 1027.500,464 850,440" fill="#008cea"/>
<line x1="851" y1="166.800" x2="1029" y2="197" stroke="#60ccff" stroke-width="1.500" opacity="0.8" filter="url(#b1)"/>
<!-- bright edges -->
<g stroke="#f0fbff" stroke-width="1.400" fill="none" filter="url(#b1)" stroke-linejoin="round">
  <polyline points="851,294.500 851,161.600 1029.600,139" stroke-opacity="0.95"/>
  <polyline points="1029.300,139 1029,294.500 851,294.500" stroke-opacity="0.75"/>
  <polyline points="1028.500,306.300 850.600,306.300 850,440 1027.500,464" stroke-opacity="0.9"/>
  <polyline points="1028.500,306.300 1027.500,464" stroke-opacity="0.8"/>
  <polyline points="788,170 838.500,163" stroke-opacity="0.7"/>
  <polyline points="788,294.500 838,294.500" stroke-opacity="0.7"/>
  <polyline points="788,306.300 838,306.300" stroke-opacity="0.7"/>
  <polyline points="838,439 788,433" stroke-opacity="0.8"/>
  <line x1="851" y1="201.500" x2="1029" y2="225"/>
  <line x1="788" y1="192.500" x2="838" y2="199"/>
  <line x1="850.500" y1="401.500" x2="1028" y2="380.300"/>
  <line x1="788" y1="409.500" x2="838" y2="404"/>
</g>
<line x1="838" y1="163" x2="838" y2="439" stroke="url(#gEdgeV)" stroke-width="2.400" filter="url(#b1)"/>
<ellipse cx="836.500" cy="352" rx="2" ry="26" fill="#fff" opacity="0.7" filter="url(#b15)"/>
<!-- flares -->
<circle cx="1029.500" cy="139.500" r="2.500" fill="#fff" opacity="0.95" filter="url(#b2)"/>
<circle cx="1027.500" cy="464" r="2.500" fill="#fff" opacity="0.95" filter="url(#b2)"/>
<ellipse cx="1005" cy="470" rx="20" ry="4" fill="#d8f4ff" opacity="0.7" filter="url(#b3)" transform="rotate(-9 1005 470)"/>

</svg>

<svg class="wp" width="1190" height="748" viewBox="0 0 1190 748">
<defs>
  
  <linearGradient id="gSam" x1="0" y1="0" x2="1" y2="1"><stop offset="0" stop-color="#7a9cc4"/><stop offset="1" stop-color="#2f5a8c"/></linearGradient>
  <linearGradient id="gBinL" x1="0" y1="0" x2="1" y2="0"><stop offset="0" stop-color="#c4c9d0"/><stop offset="1" stop-color="#e8eaec"/></linearGradient>
  <linearGradient id="gBinR" x1="0" y1="0" x2="1" y2="0"><stop offset="0" stop-color="#dcdfe2"/><stop offset="1" stop-color="#a8b0ba"/></linearGradient>
</defs>
<!-- DAEMON Tools -->
<circle cx="841" cy="-7.500" r="15.500" fill="#f4f2f0" stroke="#c4602c" stroke-width="1.800"/>
<path d="M839 -9l-6.500 13.500 3.500-1 2.500-5z" fill="#d8401c"/>
<g transform="translate(813,-3)"><rect x="0" y="0" width="13" height="13" fill="#f6f7f9" stroke="#cfd3d8" stroke-width="0.600"/><path d="M10.500 1.600L10.500 7.400L8.800 5.700C7 7.200 6.300 9 6.300 11.400L2.800 11.400C2.800 8 4.200 5.300 6.800 3.500L5 1.600Z" fill="#2c64b8"/></g>
<!-- GeForce -->
<rect x="900.600" y="-20" width="34.400" height="29.400" fill="#141414"/>
<path d="M913 6.500l-10-14h7l10 14zM927 6.500l-10-14h7l10 14z" fill="#76b900"/>
<rect x="900.600" y="6.800" width="34.400" height="2.600" fill="#7cc000"/>
<g transform="translate(888,-3)"><rect x="0" y="0" width="13" height="13" fill="#f6f7f9" stroke="#cfd3d8" stroke-width="0.600"/><path d="M10.500 1.600L10.500 7.400L8.800 5.700C7 7.200 6.300 9 6.300 11.400L2.800 11.400C2.800 8 4.200 5.300 6.800 3.500L5 1.600Z" fill="#2c64b8"/></g>
<!-- Samsung PC Studio -->
<path d="M977 -12h28.500v12c0 4-4 7.500-9 7.500h-14c-3 0-5.500-2-5.500-5z" fill="url(#gSam)"/>
<g transform="translate(963,-3)"><rect x="0" y="0" width="13" height="13" fill="#f6f7f9" stroke="#cfd3d8" stroke-width="0.600"/><path d="M10.500 1.600L10.500 7.400L8.800 5.700C7 7.200 6.300 9 6.300 11.400L2.800 11.400C2.800 8 4.200 5.300 6.800 3.500L5 1.600Z" fill="#2c64b8"/></g>
<!-- Vista Shortcut -->
<rect x="1051" y="-20" width="34" height="24.700" fill="#e9ebee" stroke="#c4c8cc" stroke-width="0.600"/>
<rect x="1051" y="-20" width="12" height="21" fill="#5a86c8"/>
<g transform="translate(1038,-3)"><rect x="0" y="0" width="13" height="13" fill="#f6f7f9" stroke="#cfd3d8" stroke-width="0.600"/><path d="M10.500 1.600L10.500 7.400L8.800 5.700C7 7.200 6.300 9 6.300 11.400L2.800 11.400C2.800 8 4.200 5.300 6.800 3.500L5 1.600Z" fill="#2c64b8"/></g>
<!-- Update -->
<rect x="1126" y="-20" width="26.500" height="26.700" fill="#f4f5f6" stroke="#c8ccd0" stroke-width="0.600"/>
<g transform="translate(1113,-3)"><rect x="0" y="0" width="13" height="13" fill="#f6f7f9" stroke="#cfd3d8" stroke-width="0.600"/><path d="M10.500 1.600L10.500 7.400L8.800 5.700C7 7.200 6.300 9 6.300 11.400L2.800 11.400C2.800 8 4.200 5.300 6.800 3.500L5 1.600Z" fill="#2c64b8"/></g>
<!-- Cube -->
<g transform="translate(1096,490)" stroke-linejoin="round">
  <polygon points="41,8.2 63.200,15.800 63.200,41.600 41,50.200 19.800,41.600 19.800,15.800" fill="#161210"/>
  <polygon points="41,9.300 49.600,12.300 41,15.400 32.800,12.300" fill="#ffe400"/>
  <polygon points="30.800,13 39.400,16.100 30.600,19.500 22,16" fill="#1a9cf0"/>
  <polygon points="51.500,13 60.600,16 51.800,19.500 43,16.200" fill="#f2f0f2"/>
  <polygon points="41.200,17 50,20.200 41,23.800 32.400,20.200" fill="#f0505a"/>
  <polygon points="20.800,17.600 29.500,21 29.500,31.600 20.800,28" fill="#ff7a18"/>
  <polygon points="31.300,21.800 40,25.600 40,36.300 31.300,32.500" fill="#f0eef0"/>
  <polygon points="20.800,30 29.500,33.600 29.500,44.200 20.800,40.600" fill="#1a8c3a"/>
  <polygon points="31.300,34.500 40,38.300 40,48.600 31.300,45" fill="#d82c30"/>
  <polygon points="42.200,25.600 50.800,22 50.800,32.500 42.200,36.300" fill="#2c8ae0"/>
  <polygon points="52.600,21.200 61.800,17.600 61.800,28 52.600,31.700" fill="#22a848"/>
  <polygon points="42.200,38.300 50.800,34.600 50.800,45 42.200,48.600" fill="#168a2c"/>
  <polygon points="52.600,33.800 61.800,30 61.800,40.600 52.600,44.300" fill="#e03c40"/>
</g>
<g transform="translate(1113,532)"><rect x="0" y="0" width="13" height="13" fill="#f6f7f9" stroke="#cfd3d8" stroke-width="0.600"/><path d="M10.500 1.600L10.500 7.400L8.800 5.700C7 7.200 6.300 9 6.300 11.400L2.800 11.400C2.800 8 4.200 5.300 6.800 3.500L5 1.600Z" fill="#2c64b8"/></g>
<!-- Recycle bin -->
<g transform="translate(1096,598)">
  <polygon points="22,14.500 35,9.500 60,15.500 44,21" fill="#e4e6e9"/>
  <path d="M27 14l4-5.500 4.500 2.500 4-1.500 5.500 2.500 4.500-1.500 4 5-10 4z" fill="#f2f3f4"/>
  <polygon points="22,14.500 44,21 42.500,51 26,45.500" fill="url(#gBinL)"/>
  <polygon points="44,21 60,15.500 55,47 42.500,51" fill="url(#gBinR)"/>
  <path d="M44 21l-1.500 30" stroke="#fff" stroke-width="0.800" opacity="0.800"/>
  <g fill="#1c8ae8">
    <path d="M29 26l3.600-2 3.800 1 2.400 3.200-.4 1.600-2.600.4-1.400-2.400-2.200-.4-1.600 1.200z"/>
    <path d="M26.400 28.400l2.600-.4 1.800 2.200-.6 1.800 1.800 3.200-1 1.600-2.400-.8-2.200-3.600z"/>
    <path d="M33.600 36l2.200-2.600 3.400-.2 1 2.400-1.600 3.200-3.200 1.400-1.200-1.400 1.200-1.400z"/>
  </g>
</g>
</svg>

<span class="t" style="left:811.00px;top:13.00px;font-size:12px;line-height:16px;color:#fff;letter-spacing:-0.234px;text-shadow:0 1px 2px #000,0 0 3px #000,1px 1px 1px #000;">DAEMON</span>
<span class="t" style="left:813.00px;top:28.00px;font-size:12px;line-height:16px;color:#fff;letter-spacing:-0.254px;text-shadow:0 1px 2px #000,0 0 3px #000,1px 1px 1px #000;">Tools Pro</span>
<span class="t" style="left:890.50px;top:13.00px;font-size:12px;line-height:16px;color:#fff;letter-spacing:-0.648px;text-shadow:0 1px 2px #000,0 0 3px #000,1px 1px 1px #000;">GeForce</span>
<span class="t" style="left:884.50px;top:28.00px;font-size:12px;line-height:16px;color:#fff;letter-spacing:-0.472px;text-shadow:0 1px 2px #000,0 0 3px #000,1px 1px 1px #000;">Experience</span>
<span class="t" style="left:953.30px;top:13.00px;font-size:12px;line-height:16px;color:#fff;letter-spacing:-0.411px;text-shadow:0 1px 2px #000,0 0 3px #000,1px 1px 1px #000;">Samsung PC</span>
<span class="t" style="left:965.00px;top:28.00px;font-size:12px;line-height:16px;color:#fff;letter-spacing:-0.107px;text-shadow:0 1px 2px #000,0 0 3px #000,1px 1px 1px #000;">Studio 7</span>
<span class="t" style="left:1049.00px;top:13.00px;font-size:12px;line-height:16px;color:#fff;letter-spacing:-0.367px;text-shadow:0 1px 2px #000,0 0 3px #000,1px 1px 1px #000;">Vista</span>
<span class="t" style="left:1040.30px;top:28.00px;font-size:12px;line-height:16px;color:#fff;letter-spacing:-0.248px;text-shadow:0 1px 2px #000,0 0 3px #000,1px 1px 1px #000;">Shortc...</span>
<span class="t" style="left:1110.50px;top:13.00px;font-size:12px;line-height:16px;color:#fff;letter-spacing:-0.121px;text-shadow:0 1px 2px #000,0 0 3px #000,1px 1px 1px #000;">Обновить</span>
<span class="t" style="left:1109.00px;top:28.00px;font-size:12px;line-height:16px;color:#fff;letter-spacing:-0.106px;text-shadow:0 1px 2px #000,0 0 3px #000,1px 1px 1px #000;">лицензи...</span>
<span class="t" style="left:1113.00px;top:548.50px;font-size:12px;line-height:16px;color:#fff;letter-spacing:0.172px;text-shadow:0 1px 2px #000,0 0 3px #000,1px 1px 1px #000;">Игровой</span>
<span class="t" style="left:1102.50px;top:563.00px;font-size:12px;line-height:16px;color:#fff;letter-spacing:-0.256px;text-shadow:0 1px 2px #000,0 0 3px #000,1px 1px 1px #000;">центр@Ma...</span>
<span class="t" style="left:1114.60px;top:655.00px;font-size:12px;line-height:16px;color:#fff;letter-spacing:-0.053px;text-shadow:0 1px 2px #000,0 0 3px #000,1px 1px 1px #000;">Корзина</span>
<div id="win">
<div class="frame"></div>
<div class="title"></div>
<svg style="position:absolute;left:151px;top:87px" width="16" height="16" viewBox="0 0 16 16"><rect width="16" height="16" fill="#6a2fa3"/><path d="M3.5 3.5h9v2.2l-5.6 4.6h5.6v2.2h-9v-2.2l5.6-4.6h-5.6z" fill="#fff"/></svg>
<svg style="position:absolute;left:660px;top:84px" width="130" height="24" viewBox="0 0 130 24">
<path d="M14 11.5h10" stroke="#000" stroke-width="1" fill="none"/>
<rect x="59.5" y="6.5" width="9" height="9" stroke="#c8c8c8" stroke-width="1" fill="none"/>
<path d="M105 6l10 10M115 6l-10 10" stroke="#000" stroke-width="1.1" fill="none"/>
</svg>
<div class="panel"></div>
<div class="gb" style="left:157px;top:138px;width:624px;height:69px"></div>
<div class="gb" style="left:157px;top:220px;width:624px;height:212px"></div>
<div class="btn" style="left:636px;top:449px;width:75px;height:21px"></div>
<div class="btn" style="left:716px;top:450px;width:73px;height:19px;box-shadow:0 0 0 1px #646464"></div>

<span class="t" style="left:181.00px;top:151.50px;font-size:11px;line-height:15px;color:#000;letter-spacing:0.106px;">Тип оперативной памяти</span>
<span class="t" style="left:234.50px;top:168.50px;font-size:11px;line-height:15px;color:#000;letter-spacing:0.055px;">Объём памяти</span>
<span class="t" style="left:500.50px;top:151.50px;font-size:11px;line-height:15px;color:#000;letter-spacing:0.132px;">Количество каналов памяти</span>
<span class="t" style="left:484.50px;top:168.50px;font-size:11px;line-height:15px;color:#000;letter-spacing:0.058px;">Режим двухканального доступа</span>
<span class="t" style="left:497.00px;top:186.50px;font-size:11px;line-height:15px;color:#000;letter-spacing:0.059px;">Частота контроллера памяти</span>
<span class="t" style="left:603.00px;top:229.50px;font-size:11px;line-height:15px;color:#000;letter-spacing:0.184px;">Частота памяти</span>
<span class="t" style="left:430.30px;top:246.50px;font-size:11px;line-height:15px;color:#000;letter-spacing:0.070px;">Соотношение частоты памяти и системной шины</span>
<span class="t" style="left:260.30px;top:264.50px;font-size:11px;line-height:15px;color:#000;">Мин время между подачей команды на чтение (CAS#) и началом передачи данных</span>
<span class="t" style="left:174.20px;top:282.50px;font-size:11px;line-height:15px;color:#000;letter-spacing:0.020px;">Время, необходимое для активации строки банка, или минимальное время между подачей сигнала</span>
<span class="t" style="left:391.30px;top:298.50px;font-size:11px;line-height:15px;color:#000;letter-spacing:-0.016px;">Время, необходимое для предварительного заряда банка</span>
<span class="t" style="left:479.50px;top:318.50px;font-size:11px;line-height:15px;color:#000;letter-spacing:0.099px;">Минимальное время активности строки</span>
<span class="t" style="left:579.50px;top:336.50px;font-size:11px;line-height:15px;color:#000;letter-spacing:-0.268px;">Bank Cycle Time (tRC)</span>
<span class="t" style="left:306.30px;top:354.50px;font-size:11px;line-height:15px;color:#000;letter-spacing:-0.020px;">Время, необходимое для декодирования контроллером команд и адресов</span>
<span class="t" style="left:211.00px;top:372.50px;font-size:11px;line-height:15px;color:#a0a0a0;letter-spacing:0.039px;text-shadow:1px 1px 0 #fff;">Число тактов , через которое контроллер памяти принудительно закрывает и предзаряжает</span>
<span class="t" style="left:474.00px;top:389.50px;font-size:11px;line-height:15px;color:#a0a0a0;letter-spacing:-0.023px;text-shadow:1px 1px 0 #fff;">Тайминг, используемый памятью RDRAM</span>
<span class="t" style="left:229.70px;top:407.50px;font-size:11px;line-height:15px;color:#a0a0a0;letter-spacing:0.080px;text-shadow:1px 1px 0 #fff;">Минимальное время между открытием строки и операцией над столбцом в этой строке</span>
<div class="vb" style="left:322px;top:148px;width:95px;height:15px"></div>
<span class="t" style="left:357.17px;top:148.50px;font-size:11px;line-height:15px;color:#0c0c96;letter-spacing:-1.000px;">DDR3</span>
<div class="vb" style="left:322px;top:168px;width:95px;height:15px"></div>
<span class="t" style="left:340.50px;top:168.50px;font-size:11px;line-height:15px;color:#0c0c96;letter-spacing:-0.014px;">4096 мбайт</span>
<div class="vb" style="left:653px;top:150px;width:122px;height:15px"></div>
<span class="t" style="left:703.30px;top:150.50px;font-size:11px;line-height:15px;color:#0c0c96;letter-spacing:-0.408px;">Dual</span>
<div class="vb" style="left:653px;top:168px;width:122px;height:15px"></div>
<span class="t" style="left:689.70px;top:168.50px;font-size:11px;line-height:15px;color:#0c0c96;letter-spacing:-0.354px;">Unganged</span>
<div class="vb" style="left:653px;top:186px;width:122px;height:15px"></div>
<span class="t" style="left:686.70px;top:186.50px;font-size:11px;line-height:15px;color:#0c0c96;letter-spacing:-0.314px;">1680.0 МГц</span>
<div class="vb" style="left:697px;top:230px;width:79px;height:15px"></div>
<span class="t" style="left:712.00px;top:230.50px;font-size:11px;line-height:15px;color:#0c0c96;letter-spacing:-0.227px;">640.0 МГц</span>
<div class="vb" style="left:697px;top:246px;width:79px;height:15px"></div>
<span class="t" style="left:729.50px;top:246.50px;font-size:11px;line-height:15px;color:#0c0c96;letter-spacing:-0.298px;">3:8</span>
<div class="vb" style="left:697px;top:264px;width:79px;height:15px"></div>
<span class="t" style="left:712.20px;top:264.50px;font-size:11px;line-height:15px;color:#0c0c96;letter-spacing:-0.036px;">8.0 clocks</span>
<div class="vb" style="left:697px;top:282px;width:79px;height:15px"></div>
<span class="t" style="left:717.20px;top:282.50px;font-size:11px;line-height:15px;color:#0c0c96;letter-spacing:-0.036px;">8 clocks</span>
<div class="vb" style="left:697px;top:299px;width:79px;height:15px"></div>
<span class="t" style="left:717.20px;top:299.50px;font-size:11px;line-height:15px;color:#0c0c96;letter-spacing:-0.036px;">8 clocks</span>
<div class="vb" style="left:697px;top:317px;width:79px;height:15px"></div>
<span class="t" style="left:714.20px;top:316.50px;font-size:11px;line-height:15px;color:#0c0c96;letter-spacing:-0.045px;">24 clocks</span>
<div class="vb" style="left:697px;top:337px;width:79px;height:15px"></div>
<span class="t" style="left:714.50px;top:337.50px;font-size:11px;line-height:15px;color:#0c0c96;letter-spacing:-0.082px;">32 clocks</span>
<div class="vb" style="left:697px;top:353px;width:79px;height:15px"></div>
<span class="t" style="left:731.58px;top:353.50px;font-size:11px;line-height:15px;color:#0c0c96;letter-spacing:-1.000px;">1T</span>
<div class="vb" style="left:697px;top:371px;width:79px;height:15px"></div>
<div class="vb" style="left:697px;top:389px;width:79px;height:15px"></div>
<div class="vb" style="left:697px;top:407px;width:79px;height:15px"></div>
<div class="tab" style="left:153px;width:41px"></div>
<span class="t" style="left:163.98px;top:115.50px;font-size:11px;line-height:15px;color:#222;letter-spacing:-1.000px;">ЦП</span>
<div class="tab" style="left:195px;width:41px"></div>
<span class="t" style="left:204.00px;top:115.50px;font-size:11px;line-height:15px;color:#222;letter-spacing:-0.430px;">Кэш</span>
<div class="tab" style="left:237px;width:41px"></div>
<span class="t" style="left:241.30px;top:115.50px;font-size:11px;line-height:15px;color:#222;letter-spacing:-0.009px;">Плата</span>
<div class="tab" style="left:330px;width:40px"></div>
<span class="t" style="left:337.59px;top:115.50px;font-size:11px;line-height:15px;color:#222;letter-spacing:-1.000px;">SPD</span>
<div class="tab" style="left:371px;width:55px"></div>
<span class="t" style="left:376.20px;top:115.50px;font-size:11px;line-height:15px;color:#222;letter-spacing:-0.159px;">Графика</span>
<div class="tab" style="left:427px;width:75px"></div>
<span class="t" style="left:431.70px;top:115.50px;font-size:11px;line-height:15px;color:#222;letter-spacing:-0.370px;">О программе</span>
<div class="tab sel" style="left:278px;width:52px"></div>
<span class="t" style="left:284.20px;top:114.50px;font-size:11px;line-height:15px;color:#1414f0;letter-spacing:-0.263px;">Память</span>
<div style="position:absolute;left:164px;top:137px;width:38px;height:4px;background:#f0f0f0"></div>
<div style="position:absolute;left:164px;top:219px;width:52px;height:4px;background:#f0f0f0"></div>
<span class="t" style="left:166.00px;top:130.50px;font-size:11px;line-height:15px;color:#000;letter-spacing:-0.543px;">Общие</span>
<span class="t" style="left:166.00px;top:212.50px;font-size:11px;line-height:15px;color:#000;letter-spacing:-0.105px;">Тайминги</span>
<span class="t" style="left:172.50px;top:87.00px;font-size:12px;line-height:16px;color:#000;letter-spacing:-0.543px;">CPU-Z</span>
<span class="t" style="left:157.00px;top:448.00px;font-size:20px;line-height:24px;color:#a0a0a0;letter-spacing:-0.527px;font-weight:bold;font-style:italic;text-shadow:1px 1px 0 #fff;">CPU-Z</span>
<span class="t" style="left:228.30px;top:455.50px;font-size:11px;line-height:15px;color:#000;letter-spacing:-0.043px;">Version 1.62.0.x64</span>
<span class="t" style="left:648.00px;top:451.50px;font-size:11px;line-height:15px;color:#000;letter-spacing:-0.040px;">Проверка</span>
<span class="t" style="left:744.15px;top:451.50px;font-size:11px;line-height:15px;color:#000;letter-spacing:-1.000px;">OK</span>
</div>
<div id="tb">
<div class="bar"></div>
<div style="position:absolute;left:141px;top:708px;width:48px;height:38px;background:#333438"></div>
<div style="position:absolute;left:96px;top:746px;width:40px;height:2px;background:#78c4ff"></div>
<div style="position:absolute;left:141px;top:746px;width:48px;height:2px;background:#78c4ff"></div>
<div style="position:absolute;left:1185px;top:708px;width:1px;height:40px;background:#6a6c70"></div>
<svg style="position:absolute;left:0;top:706px" width="1190" height="42" viewBox="0 706 1190 42">
<defs>
  <linearGradient id="gCz" x1="0" y1="0" x2="0" y2="1"><stop offset="0" stop-color="#8452c4"/><stop offset="0.5" stop-color="#6a30b0"/><stop offset="1" stop-color="#5420a0"/></linearGradient>
  <linearGradient id="gWmp" x1="0" y1="0" x2="1" y2="0"><stop offset="0" stop-color="#6aa8d6"/><stop offset="0.8" stop-color="#9cd0f0"/><stop offset="0.82" stop-color="#5a9cd0"/><stop offset="1" stop-color="#8cc4ea"/></linearGradient>
  <radialGradient id="gOr" cx="0.4" cy="0.35" r="0.7"><stop offset="0" stop-color="#ffa030"/><stop offset="1" stop-color="#f06a10"/></radialGradient>
</defs>
<!-- store -->
<g>
  <path d="M11.500 721.500c.5-7.500 9.500-7.500 10 -.8" fill="none" stroke="#fff" stroke-width="1.200"/>
  <path d="M13.800 721c.5-6 7.500-6 8 -.5" fill="none" stroke="#fff" stroke-width="0.900"/>
  <polygon points="7,722.800 28,720 28,739.800 7,737" fill="#fff"/>
  <polygon points="10,725.400 13.800,724.900 13.800,728.300 10,728.500" fill="#000306"/>
  <polygon points="15,724.700 21,723.900 21,728 15,728.300" fill="#000306"/>
  <polygon points="10,730.200 13.800,730.300 13.800,733.800 10,733.300" fill="#000306"/>
  <polygon points="15,730.300 21,730.400 21,734.800 15,734" fill="#000306"/>
</g>
<!-- wmp -->
<g>
  <polygon points="56,720 76,719.600 76,737 72.500,738.400 56,737" fill="url(#gWmp)"/>
  <circle cx="64.300" cy="728.700" r="6.300" fill="url(#gOr)"/>
  <polygon points="62,724.600 68.700,728.700 62,732.800" fill="#fff"/>
</g>
<!-- chrome -->
<g transform="translate(116,727.900)">
  <circle r="11.200" fill="#db4437"/>
  <path d="M0 0L-9.700 -5.600A11.200 11.200 0 0 0 -0.800 11.170L4.300 2.500z" fill="#1da462"/>
  <path d="M0 0L-0.800 11.170A11.200 11.200 0 0 0 9.700 -5.600L0 -5z" fill="#ffcd40"/>
  <path d="M-9.700 -5.600A11.200 11.200 0 0 1 9.700 -5.600L0 -5.600z" fill="#db4437"/>
  <circle r="5.100" fill="#f4f6f8"/>
  <circle r="4.100" fill="#4285f4"/>
</g>
<!-- cpuz -->
<g>
  <rect x="153.200" y="716" width="23.500" height="23.700" rx="2" fill="url(#gCz)"/>
  <rect x="156.800" y="719.200" width="16.400" height="17.300" rx="2" fill="none" stroke="#fff" stroke-width="1.300" stroke-dasharray="1.200 0.500"/>
  <rect x="158.400" y="720.800" width="13.200" height="3" fill="#9a70d0"/>
  <rect x="158.400" y="732" width="13.200" height="3" fill="#7840b8"/>
  <text x="165" y="730.800" font-family="'Liberation Sans',sans-serif" font-weight="bold" font-size="7.500" text-anchor="middle" fill="#fff" textLength="14.500" lengthAdjust="spacingAndGlyphs">CPUZ</text>
</g>
<!-- tray -->
<g fill="none" stroke="#fff" stroke-width="1.100">
  <polyline points="984,730.800 990,724.700 996,730.800"/>
  <path d="M1006.500 726h2l3.500 -3.500v12l-3.500 -3.500h-2z"/>
  <path d="M1014 726.200a3.300 3.300 0 0 1 0 4.600M1016 724a6 6 0 0 1 0 9M1018.500 721.800a9.200 9.200 0 0 1 0 13.400"/>
  <rect x="1035" y="722.800" width="10.500" height="9"/>
  <path d="M1040.300 731.800v3M1036.500 734.800h7.500"/>
  <rect x="1030.500" y="722.800" width="4.500" height="4.800"/>
  <path d="M1032.700 727.600v7.600"/>
</g>
<path d="M1054 720h16v13h-5l-3 3 -3 -3h-5z" fill="#fff"/>
<path d="M1057 723.700h10M1057 726.400h10M1057 729.300h6" stroke="#000306" stroke-width="1" fill="none"/>
</svg>

<span class="t" style="left:1079.64px;top:720.00px;font-size:12px;line-height:16px;color:#fff;letter-spacing:-1.000px;">ENG</span>
<span class="t" style="left:1134.98px;top:711.00px;font-size:12px;line-height:16px;color:#fff;letter-spacing:-1.000px;">18:23</span>
<span class="t" style="left:1120.30px;top:728.00px;font-size:12px;line-height:16px;color:#fff;letter-spacing:-0.707px;">05.01.2016</span>
</div>
</div>
</body></html>
